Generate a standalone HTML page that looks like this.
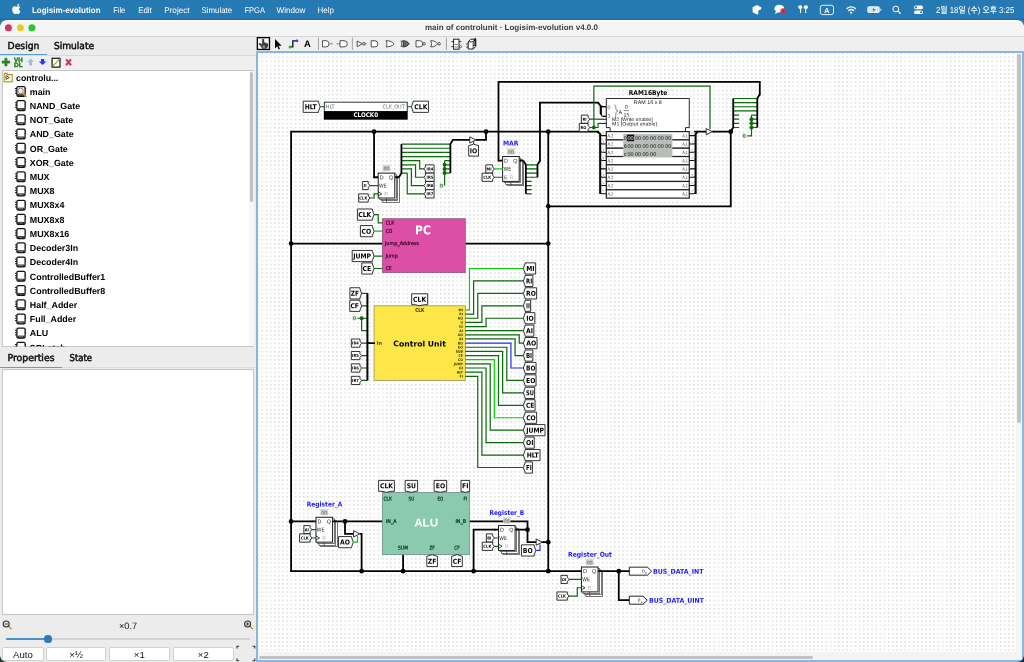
<!DOCTYPE html>
<html lang="ko"><head><meta charset="utf-8"><title>main of controlunit · Logisim-evolution v4.0.0</title>
<style>
html,body{margin:0;padding:0}
body{width:1024px;height:662px;overflow:hidden;position:relative;background:#ececec;font-family:"Liberation Sans","Noto Sans CJK KR",sans-serif;}
.abs{position:absolute}
.t{position:absolute;white-space:nowrap;line-height:1}
svg text{white-space:pre;text-rendering:geometricPrecision}
svg{will-change:transform}
.btn{will-change:transform}
</style></head><body>
<div class="abs" id="menubar" style="left:0;top:0;width:1024px;height:19.6px;background:linear-gradient(#267ab4 0,#267ab4 17.4px,#1f6ea8 19.2px)"></div>
<div class="abs" id="window" style="left:0;top:19.6px;width:1024px;height:642.4px;background:#ececec;border-radius:5.5px 5.5px 0 0"></div>
<div class="abs" id="titlebar" style="left:0;top:19.6px;width:1024px;height:17px;background:#f5f5f5;border-radius:5.5px 5.5px 0 0;border-top:0.9px solid #fff;border-bottom:0.8px solid #d6d6d6;box-sizing:border-box"></div>
<div class="abs" id="tabs1" style="left:0;top:36.6px;width:255.5px;height:18.4px;background:#ececec;border-bottom:0.8px solid #dadada"></div>
<div class="abs" style="left:0;top:54px;width:47px;height:1.4px;background:#5b9bd8"></div>
<div class="abs" id="projbar" style="left:0;top:55.6px;width:255.5px;height:14.6px;background:#efefef"></div>
<div class="abs" id="tree" style="left:1.5px;top:70.4px;width:252.6px;height:276.2px;background:#fff;border:0.8px solid #c6c6c6;box-sizing:border-box"></div>
<div class="abs" style="left:248.9px;top:71.2px;width:5.2px;height:274.8px;background:#f6f6f6"></div>
<div class="abs" style="left:249.6px;top:72.4px;width:3.3px;height:129.6px;background:#c1c1c1;border-radius:1.7px"></div>
<div class="abs" id="tabs2" style="left:0;top:347px;width:255.5px;height:21.6px;background:#ececec"></div>
<div class="abs" style="left:0;top:367.2px;width:255.5px;height:1.2px;background:#dedede"></div>
<div class="abs" style="left:0;top:367.1px;width:62px;height:1.4px;background:#5b9bd8"></div>
<div class="abs" id="props" style="left:1.5px;top:369.4px;width:252.6px;height:246px;background:#fff;border:0.8px solid #c6c6c6;box-sizing:border-box"></div>
<div class="abs" style="left:6px;top:638.3px;width:244px;height:1.4px;background:#d2d2d2;border-radius:1px"></div>
<div class="abs" style="left:6px;top:638.2px;width:42px;height:1.6px;background:#4a90d6;border-radius:1px"></div>
<div class="abs" style="left:44.4px;top:635.4px;width:7.2px;height:7.2px;background:#2b7bc0;border-radius:50%"></div>
<div class="abs btn" style="left:1.6px;top:646.6px;width:41.8px;height:13.6px;background:#fff;border:0.8px solid #d0d0d0;border-radius:2px;box-sizing:border-box;font-size:9.6px;line-height:13px;text-align:center;color:#111">Auto</div>
<div class="abs btn" style="left:46.4px;top:646.6px;width:60.2px;height:13.6px;background:#fff;border:0.8px solid #d0d0d0;border-radius:2px;box-sizing:border-box;font-size:9.6px;line-height:13px;text-align:center;color:#111">×½</div>
<div class="abs btn" style="left:109.4px;top:646.6px;width:60.6px;height:13.6px;background:#fff;border:0.8px solid #d0d0d0;border-radius:2px;box-sizing:border-box;font-size:9.6px;line-height:13px;text-align:center;color:#111">×1</div>
<div class="abs btn" style="left:172.8px;top:646.6px;width:60.6px;height:13.6px;background:#fff;border:0.8px solid #d0d0d0;border-radius:2px;box-sizing:border-box;font-size:9.6px;line-height:13px;text-align:center;color:#111">×2</div>
<div class="abs" id="toolbar" style="left:255.5px;top:36.6px;width:768.5px;height:14.6px;background:#efefef"></div>
<div class="abs" id="canvas" style="left:256px;top:51.1px;width:768px;height:610.9px;background:#8ab6e6"></div>
<div class="abs" style="left:257.9px;top:53px;width:763.8px;height:607.3px;background:#fff"></div>
<div class="abs" style="left:1016.2px;top:53px;width:5.5px;height:599px;background:#f4f4f4"></div>
<div class="abs" style="left:257.9px;top:652.4px;width:763.8px;height:7.9px;background:#f4f4f4"></div>
<div class="abs" style="left:1017.4px;top:54.2px;width:3.4px;height:368.4px;background:#c2c2c2;border-radius:1.7px"></div>
<div class="abs" style="left:259.4px;top:655.6px;width:553.4px;height:3.2px;background:#c2c2c2;border-radius:1.6px"></div>
<div class="abs" style="left:0;top:656px;width:6px;height:6px;background:radial-gradient(circle at 6px 0px, rgba(0,0,0,0) 5.4px, #23382c 5.9px)"></div>
<div class="abs" style="left:1018px;top:656px;width:6px;height:6px;background:radial-gradient(circle at 0px 0px, rgba(0,0,0,0) 5.4px, #1d2a26 5.9px)"></div>
<div class="abs" style="left:0;top:19.6px;width:6px;height:6px;background:radial-gradient(circle at 6px 6px, rgba(0,0,0,0) 5.4px, #2778b5 5.9px)"></div>
<div class="abs" style="left:1018px;top:19.6px;width:6px;height:6px;background:radial-gradient(circle at 0px 6px, rgba(0,0,0,0) 5.4px, #2778b5 5.9px)"></div>
<svg class="abs" style="left:0;top:0" width="1024" height="662" viewBox="0 0 1024 662">
<g fill="#fff"><path d="M17.9 8.1c0-1.3 1.05-1.9 1.1-1.95-0.6-0.88-1.53-1-1.86-1.01-0.79-0.08-1.55 0.47-1.95 0.47-0.4 0-1.02-0.46-1.68-0.45-0.86 0.01-1.66 0.5-2.1 1.28-0.9 1.56-0.23 3.86 0.64 5.12 0.43 0.62 0.94 1.31 1.6 1.29 0.64-0.03 0.89-0.42 1.66-0.42 0.78 0 1 0.42 1.68 0.4 0.69-0.01 1.13-0.63 1.55-1.25 0.49-0.72 0.69-1.41 0.7-1.45-0.02-0.01-1.34-0.51-1.35-2.03z" transform="translate(1.2,1.2)"/><path d="M17.5 4.2c0.35-0.43 0.59-1.02 0.53-1.61-0.51 0.02-1.12 0.34-1.49 0.77-0.33 0.38-0.61 0.98-0.54 1.56 0.57 0.04 1.15-0.29 1.5-0.72z" transform="translate(1.2,1.2)"/></g>
<text x="32" y="12.6" font-size="8.3" font-weight="bold" fill="#fff" font-family='"Liberation Sans","Noto Sans CJK KR",sans-serif' text-anchor="start" textLength="68.5" lengthAdjust="spacingAndGlyphs" >Logisim-evolution</text>
<text x="113.2" y="12.6" font-size="8.3" font-weight="normal" fill="#fff" font-family='"Liberation Sans","Noto Sans CJK KR",sans-serif' text-anchor="start" textLength="12.0" lengthAdjust="spacingAndGlyphs" >File</text>
<text x="138.2" y="12.6" font-size="8.3" font-weight="normal" fill="#fff" font-family='"Liberation Sans","Noto Sans CJK KR",sans-serif' text-anchor="start" textLength="13.6" lengthAdjust="spacingAndGlyphs" >Edit</text>
<text x="164.2" y="12.6" font-size="8.3" font-weight="normal" fill="#fff" font-family='"Liberation Sans","Noto Sans CJK KR",sans-serif' text-anchor="start" textLength="25.4" lengthAdjust="spacingAndGlyphs" >Project</text>
<text x="201.5" y="12.6" font-size="8.3" font-weight="normal" fill="#fff" font-family='"Liberation Sans","Noto Sans CJK KR",sans-serif' text-anchor="start" textLength="30.7" lengthAdjust="spacingAndGlyphs" >Simulate</text>
<text x="244.5" y="12.6" font-size="8.3" font-weight="normal" fill="#fff" font-family='"Liberation Sans","Noto Sans CJK KR",sans-serif' text-anchor="start" textLength="20.5" lengthAdjust="spacingAndGlyphs" >FPGA</text>
<text x="276.5" y="12.6" font-size="8.3" font-weight="normal" fill="#fff" font-family='"Liberation Sans","Noto Sans CJK KR",sans-serif' text-anchor="start" textLength="29.0" lengthAdjust="spacingAndGlyphs" >Window</text>
<text x="317.5" y="12.6" font-size="8.3" font-weight="normal" fill="#fff" font-family='"Liberation Sans","Noto Sans CJK KR",sans-serif' text-anchor="start" textLength="16.5" lengthAdjust="spacingAndGlyphs" >Help</text>
<text x="936" y="12.799999999999999" font-size="8.6" font-weight="500" fill="#fff" font-family='"Liberation Sans","Noto Sans CJK KR",sans-serif' text-anchor="start" textLength="78.3" lengthAdjust="spacingAndGlyphs" >2월 18일 (수) 오후 3:25</text>
<g fill="#fff" stroke="none">
<path d="M752.6 7.2 L757 4.9 L761.2 7.2 L761.2 9.2 L758.3 10.4 L758.3 13.9 L757 14.5 L752.6 12.2 Z"/>
<ellipse cx="779.3" cy="8.6" rx="4.9" ry="3.9"/><path d="M776 11 L775 14 L779 12 Z"/>
<circle cx="783.3" cy="11.2" r="2.9" fill="#e0324b"/><circle cx="783.3" cy="11.2" r="1.2" fill="#b8283c"/>
<path d="M798.2 7.3a2.1 2.1 0 0 1 4.2 0 v1.2 h-1.3 v4.6 h-1.1 v-4.2 a2 2 0 0 1 -1.8 -1.6z"/>
<path d="M808 7.3a2.1 2.1 0 0 0 -4.2 0 v1.2 h1.3 v4.6 h1.1 v-4.2 a2 2 0 0 0 1.8 -1.6z"/>
</g>
<rect x="820.3" y="5.3" width="13.2" height="9.3" rx="2.2" fill="none" stroke="#fff" stroke-width="0.9"/>
<text x="826.9" y="12.6" font-size="7.2" font-weight="bold" fill="#fff" font-family='"Liberation Sans","Noto Sans CJK KR",sans-serif' text-anchor="middle" >A</text>
<g fill="none" stroke="#fff" stroke-linecap="round"><path d="M847 8.6a6.2 6.2 0 0 1 8.4 0" stroke-width="1.3"/><path d="M848.7 10.6a3.8 3.8 0 0 1 5 0" stroke-width="1.3"/></g><circle cx="851.2" cy="12.7" r="1.1" fill="#fff"/>
<rect x="867.3" y="6.3" width="12.4" height="6.8" rx="1.8" fill="#fff" opacity="0.92"/><rect x="880.3" y="8.4" width="1.1" height="2.6" rx="0.5" fill="#fff" opacity="0.8"/>
<path d="M874.6 6.8 l-2.6 3.4 h1.9 l-0.9 2.6 l2.8 -3.5 h-1.9 z" fill="#2778b5"/>
<path d="M869 7.5v4.4M871 7.5v4.4M877.3 7.5v4.4" stroke="#2778b5" stroke-width="0.5" opacity="0.5"/>
<circle cx="895.8" cy="9" r="2.9" fill="none" stroke="#fff" stroke-width="1"/><line x1="898" y1="11.2" x2="900.3" y2="13.5" stroke="#fff" stroke-width="1.1" stroke-linecap="round"/>
<rect x="914" y="5.6" width="9" height="3.7" rx="1.85" fill="#fff"/><rect x="914" y="10.4" width="9" height="3.7" rx="1.85" fill="#fff"/><circle cx="915.9" cy="7.45" r="1.1" fill="#2778b5"/><circle cx="921.1" cy="12.25" r="1.1" fill="#2778b5"/>
<circle cx="8.4" cy="27.7" r="3.5" fill="#d2365f"/><circle cx="20.4" cy="27.7" r="3.5" fill="#eed02a"/><circle cx="31.9" cy="27.7" r="3.5" fill="#27c728"/>
<circle cx="20.4" cy="27.7" r="1.6" fill="none" stroke="#d9b822" stroke-width="0.6"/>
<text x="511.5" y="30.4" font-size="8.1" font-weight="bold" fill="#3e3e3e" font-family='"Liberation Sans","Noto Sans CJK KR",sans-serif' text-anchor="middle" textLength="173" lengthAdjust="spacingAndGlyphs" >main of controlunit · Logisim-evolution v4.0.0</text>
<text x="7.5" y="49.4" font-size="9.5" font-weight="normal" fill="#111" font-family='"DejaVu Sans","Liberation Sans",sans-serif' text-anchor="start" textLength="32" lengthAdjust="spacingAndGlyphs" stroke="#111" stroke-width="0.5">Design</text>
<text x="53.9" y="49.4" font-size="9.5" font-weight="normal" fill="#111" font-family='"DejaVu Sans","Liberation Sans",sans-serif' text-anchor="start" textLength="40.2" lengthAdjust="spacingAndGlyphs" stroke="#111" stroke-width="0.5">Simulate</text>
<text x="7.5" y="361.4" font-size="9.5" font-weight="normal" fill="#111" font-family='"DejaVu Sans","Liberation Sans",sans-serif' text-anchor="start" textLength="47" lengthAdjust="spacingAndGlyphs" stroke="#111" stroke-width="0.5">Properties</text>
<text x="69.5" y="361.4" font-size="9.5" font-weight="normal" fill="#111" font-family='"DejaVu Sans","Liberation Sans",sans-serif' text-anchor="start" textLength="22.6" lengthAdjust="spacingAndGlyphs" stroke="#111" stroke-width="0.5">State</text>
<path d="M4.8 58.2h2.3v2.7h2.7v2.3h-2.7v2.7h-2.3v-2.7h-2.7v-2.3h2.7z" fill="#1d8f1d" stroke="#0f6d0f" stroke-width="0.4"/>
<text x="14" y="62.1" font-size="6.2" font-weight="bold" fill="#1a7f1a" font-family='"Liberation Sans","Noto Sans CJK KR",sans-serif' text-anchor="start" textLength="8.7" lengthAdjust="spacingAndGlyphs" stroke="#1a7f1a" stroke-width="0.35">VH</text>
<text x="14" y="66.9" font-size="6.2" font-weight="bold" fill="#1a7f1a" font-family='"Liberation Sans","Noto Sans CJK KR",sans-serif' text-anchor="start" textLength="8.7" lengthAdjust="spacingAndGlyphs" stroke="#1a7f1a" stroke-width="0.35">DL</text>
<path d="M30.6 58.5l3.4 3.5h-2v3.4h-2.8v-3.4h-2z" fill="#93c2f0"/>
<path d="M42.6 65.1l3.8-3.7h-2.2v-2.5h-3.2v2.5h-2.2z" fill="#1d3dff"/>
<rect x="52.1" y="58.3" width="7.9" height="8.8" fill="#fff" stroke="#111" stroke-width="1.2"/><line x1="52.6" y1="66.3" x2="59.6" y2="58.9" stroke="#b8901c" stroke-width="1.1"/><circle cx="52.3" cy="62" r="0.7" fill="#1eaa1e"/><circle cx="59.9" cy="61" r="0.7" fill="#2040ff"/>
<path d="M65.3 60l1.6-1.3 1.6 1.9 1.7-1.9 1.6 1.3-1.8 2.3 1.8 2.3-1.6 1.3-1.7-1.9-1.6 1.9-1.6-1.3 1.8-2.3z" fill="#d6336a"/>
<g><path d="M4.2 73.4h3v1.2h5v7.2h-8z" fill="#fff" stroke="#b3940f" stroke-width="1.1"/><path d="M6 75.6l3.4 1.9-3.4 1.9z" fill="#fff" stroke="#111" stroke-width="0.7"/><line x1="4" y1="82.2" x2="12.6" y2="82.2" stroke="#8bc34a" stroke-width="0.5"/></g>
<text x="16.1" y="80.9" font-size="8.9" font-weight="bold" fill="#000" font-family='"Liberation Sans","Noto Sans CJK KR",sans-serif' text-anchor="start" textLength="42.2" lengthAdjust="spacingAndGlyphs" >controlu...</text>
<clipPath id="treeclip"><rect x="2" y="71" width="247" height="275.4"/></clipPath><g clip-path="url(#treeclip)">
<g transform="translate(15,85.7)"><rect x="1.9" y="0.8" width="8.2" height="9.8" rx="1.3" fill="#fff" stroke="#111" stroke-width="1.25"/><rect x="2.4" y="8.2" width="7.2" height="2.2" fill="#222"/><rect x="3.6" y="8.9" width="4.6" height="0.7" fill="#999"/><rect x="0" y="2.3" width="1.9" height="1" fill="#111"/><rect x="0" y="4.6" width="1.9" height="1" fill="#111"/><rect x="0" y="6.9" width="1.9" height="1" fill="#111"/><rect x="10.1" y="2.3" width="1" height="1" fill="#111"/><rect x="10.1" y="4.6" width="1" height="1" fill="#111"/><circle cx="5.6" cy="5.2" r="2.7" fill="#eee" stroke="#8a8a8a" stroke-width="1"/><line x1="7.6" y1="7.4" x2="11.2" y2="10.9" stroke="#c8901a" stroke-width="1.5" stroke-linecap="round"/></g>
<text x="29.8" y="94.7" font-size="8.9" font-weight="bold" fill="#000" font-family='"Liberation Sans","Noto Sans CJK KR",sans-serif' text-anchor="start" >main</text>
<g transform="translate(15,99.92)"><rect x="1.9" y="0.8" width="8.2" height="9.8" rx="1.3" fill="#fff" stroke="#111" stroke-width="1.25"/><rect x="2.4" y="8.2" width="7.2" height="2.2" fill="#222"/><rect x="3.6" y="8.9" width="4.6" height="0.7" fill="#999"/><rect x="0" y="2.3" width="1.9" height="1" fill="#111"/><rect x="0" y="4.6" width="1.9" height="1" fill="#111"/><rect x="0" y="6.9" width="1.9" height="1" fill="#111"/><rect x="10.1" y="2.3" width="1" height="1" fill="#111"/><rect x="10.1" y="4.6" width="1" height="1" fill="#111"/></g>
<text x="29.8" y="108.92" font-size="8.9" font-weight="bold" fill="#000" font-family='"Liberation Sans","Noto Sans CJK KR",sans-serif' text-anchor="start" >NAND_Gate</text>
<g transform="translate(15,114.14)"><rect x="1.9" y="0.8" width="8.2" height="9.8" rx="1.3" fill="#fff" stroke="#111" stroke-width="1.25"/><rect x="2.4" y="8.2" width="7.2" height="2.2" fill="#222"/><rect x="3.6" y="8.9" width="4.6" height="0.7" fill="#999"/><rect x="0" y="2.3" width="1.9" height="1" fill="#111"/><rect x="0" y="4.6" width="1.9" height="1" fill="#111"/><rect x="0" y="6.9" width="1.9" height="1" fill="#111"/><rect x="10.1" y="2.3" width="1" height="1" fill="#111"/><rect x="10.1" y="4.6" width="1" height="1" fill="#111"/></g>
<text x="29.8" y="123.14" font-size="8.9" font-weight="bold" fill="#000" font-family='"Liberation Sans","Noto Sans CJK KR",sans-serif' text-anchor="start" >NOT_Gate</text>
<g transform="translate(15,128.36)"><rect x="1.9" y="0.8" width="8.2" height="9.8" rx="1.3" fill="#fff" stroke="#111" stroke-width="1.25"/><rect x="2.4" y="8.2" width="7.2" height="2.2" fill="#222"/><rect x="3.6" y="8.9" width="4.6" height="0.7" fill="#999"/><rect x="0" y="2.3" width="1.9" height="1" fill="#111"/><rect x="0" y="4.6" width="1.9" height="1" fill="#111"/><rect x="0" y="6.9" width="1.9" height="1" fill="#111"/><rect x="10.1" y="2.3" width="1" height="1" fill="#111"/><rect x="10.1" y="4.6" width="1" height="1" fill="#111"/></g>
<text x="29.8" y="137.36" font-size="8.9" font-weight="bold" fill="#000" font-family='"Liberation Sans","Noto Sans CJK KR",sans-serif' text-anchor="start" >AND_Gate</text>
<g transform="translate(15,142.58)"><rect x="1.9" y="0.8" width="8.2" height="9.8" rx="1.3" fill="#fff" stroke="#111" stroke-width="1.25"/><rect x="2.4" y="8.2" width="7.2" height="2.2" fill="#222"/><rect x="3.6" y="8.9" width="4.6" height="0.7" fill="#999"/><rect x="0" y="2.3" width="1.9" height="1" fill="#111"/><rect x="0" y="4.6" width="1.9" height="1" fill="#111"/><rect x="0" y="6.9" width="1.9" height="1" fill="#111"/><rect x="10.1" y="2.3" width="1" height="1" fill="#111"/><rect x="10.1" y="4.6" width="1" height="1" fill="#111"/></g>
<text x="29.8" y="151.58" font-size="8.9" font-weight="bold" fill="#000" font-family='"Liberation Sans","Noto Sans CJK KR",sans-serif' text-anchor="start" >OR_Gate</text>
<g transform="translate(15,156.8)"><rect x="1.9" y="0.8" width="8.2" height="9.8" rx="1.3" fill="#fff" stroke="#111" stroke-width="1.25"/><rect x="2.4" y="8.2" width="7.2" height="2.2" fill="#222"/><rect x="3.6" y="8.9" width="4.6" height="0.7" fill="#999"/><rect x="0" y="2.3" width="1.9" height="1" fill="#111"/><rect x="0" y="4.6" width="1.9" height="1" fill="#111"/><rect x="0" y="6.9" width="1.9" height="1" fill="#111"/><rect x="10.1" y="2.3" width="1" height="1" fill="#111"/><rect x="10.1" y="4.6" width="1" height="1" fill="#111"/></g>
<text x="29.8" y="165.8" font-size="8.9" font-weight="bold" fill="#000" font-family='"Liberation Sans","Noto Sans CJK KR",sans-serif' text-anchor="start" >XOR_Gate</text>
<g transform="translate(15,171.02)"><rect x="1.9" y="0.8" width="8.2" height="9.8" rx="1.3" fill="#fff" stroke="#111" stroke-width="1.25"/><rect x="2.4" y="8.2" width="7.2" height="2.2" fill="#222"/><rect x="3.6" y="8.9" width="4.6" height="0.7" fill="#999"/><rect x="0" y="2.3" width="1.9" height="1" fill="#111"/><rect x="0" y="4.6" width="1.9" height="1" fill="#111"/><rect x="0" y="6.9" width="1.9" height="1" fill="#111"/><rect x="10.1" y="2.3" width="1" height="1" fill="#111"/><rect x="10.1" y="4.6" width="1" height="1" fill="#111"/></g>
<text x="29.8" y="180.02" font-size="8.9" font-weight="bold" fill="#000" font-family='"Liberation Sans","Noto Sans CJK KR",sans-serif' text-anchor="start" >MUX</text>
<g transform="translate(15,185.24)"><rect x="1.9" y="0.8" width="8.2" height="9.8" rx="1.3" fill="#fff" stroke="#111" stroke-width="1.25"/><rect x="2.4" y="8.2" width="7.2" height="2.2" fill="#222"/><rect x="3.6" y="8.9" width="4.6" height="0.7" fill="#999"/><rect x="0" y="2.3" width="1.9" height="1" fill="#111"/><rect x="0" y="4.6" width="1.9" height="1" fill="#111"/><rect x="0" y="6.9" width="1.9" height="1" fill="#111"/><rect x="10.1" y="2.3" width="1" height="1" fill="#111"/><rect x="10.1" y="4.6" width="1" height="1" fill="#111"/></g>
<text x="29.8" y="194.24" font-size="8.9" font-weight="bold" fill="#000" font-family='"Liberation Sans","Noto Sans CJK KR",sans-serif' text-anchor="start" >MUX8</text>
<g transform="translate(15,199.46)"><rect x="1.9" y="0.8" width="8.2" height="9.8" rx="1.3" fill="#fff" stroke="#111" stroke-width="1.25"/><rect x="2.4" y="8.2" width="7.2" height="2.2" fill="#222"/><rect x="3.6" y="8.9" width="4.6" height="0.7" fill="#999"/><rect x="0" y="2.3" width="1.9" height="1" fill="#111"/><rect x="0" y="4.6" width="1.9" height="1" fill="#111"/><rect x="0" y="6.9" width="1.9" height="1" fill="#111"/><rect x="10.1" y="2.3" width="1" height="1" fill="#111"/><rect x="10.1" y="4.6" width="1" height="1" fill="#111"/></g>
<text x="29.8" y="208.46" font-size="8.9" font-weight="bold" fill="#000" font-family='"Liberation Sans","Noto Sans CJK KR",sans-serif' text-anchor="start" >MUX8x4</text>
<g transform="translate(15,213.68)"><rect x="1.9" y="0.8" width="8.2" height="9.8" rx="1.3" fill="#fff" stroke="#111" stroke-width="1.25"/><rect x="2.4" y="8.2" width="7.2" height="2.2" fill="#222"/><rect x="3.6" y="8.9" width="4.6" height="0.7" fill="#999"/><rect x="0" y="2.3" width="1.9" height="1" fill="#111"/><rect x="0" y="4.6" width="1.9" height="1" fill="#111"/><rect x="0" y="6.9" width="1.9" height="1" fill="#111"/><rect x="10.1" y="2.3" width="1" height="1" fill="#111"/><rect x="10.1" y="4.6" width="1" height="1" fill="#111"/></g>
<text x="29.8" y="222.68" font-size="8.9" font-weight="bold" fill="#000" font-family='"Liberation Sans","Noto Sans CJK KR",sans-serif' text-anchor="start" >MUX8x8</text>
<g transform="translate(15,227.9)"><rect x="1.9" y="0.8" width="8.2" height="9.8" rx="1.3" fill="#fff" stroke="#111" stroke-width="1.25"/><rect x="2.4" y="8.2" width="7.2" height="2.2" fill="#222"/><rect x="3.6" y="8.9" width="4.6" height="0.7" fill="#999"/><rect x="0" y="2.3" width="1.9" height="1" fill="#111"/><rect x="0" y="4.6" width="1.9" height="1" fill="#111"/><rect x="0" y="6.9" width="1.9" height="1" fill="#111"/><rect x="10.1" y="2.3" width="1" height="1" fill="#111"/><rect x="10.1" y="4.6" width="1" height="1" fill="#111"/></g>
<text x="29.8" y="236.9" font-size="8.9" font-weight="bold" fill="#000" font-family='"Liberation Sans","Noto Sans CJK KR",sans-serif' text-anchor="start" >MUX8x16</text>
<g transform="translate(15,242.12)"><rect x="1.9" y="0.8" width="8.2" height="9.8" rx="1.3" fill="#fff" stroke="#111" stroke-width="1.25"/><rect x="2.4" y="8.2" width="7.2" height="2.2" fill="#222"/><rect x="3.6" y="8.9" width="4.6" height="0.7" fill="#999"/><rect x="0" y="2.3" width="1.9" height="1" fill="#111"/><rect x="0" y="4.6" width="1.9" height="1" fill="#111"/><rect x="0" y="6.9" width="1.9" height="1" fill="#111"/><rect x="10.1" y="2.3" width="1" height="1" fill="#111"/><rect x="10.1" y="4.6" width="1" height="1" fill="#111"/></g>
<text x="29.8" y="251.12" font-size="8.9" font-weight="bold" fill="#000" font-family='"Liberation Sans","Noto Sans CJK KR",sans-serif' text-anchor="start" >Decoder3In</text>
<g transform="translate(15,256.34)"><rect x="1.9" y="0.8" width="8.2" height="9.8" rx="1.3" fill="#fff" stroke="#111" stroke-width="1.25"/><rect x="2.4" y="8.2" width="7.2" height="2.2" fill="#222"/><rect x="3.6" y="8.9" width="4.6" height="0.7" fill="#999"/><rect x="0" y="2.3" width="1.9" height="1" fill="#111"/><rect x="0" y="4.6" width="1.9" height="1" fill="#111"/><rect x="0" y="6.9" width="1.9" height="1" fill="#111"/><rect x="10.1" y="2.3" width="1" height="1" fill="#111"/><rect x="10.1" y="4.6" width="1" height="1" fill="#111"/></g>
<text x="29.8" y="265.34" font-size="8.9" font-weight="bold" fill="#000" font-family='"Liberation Sans","Noto Sans CJK KR",sans-serif' text-anchor="start" >Decoder4In</text>
<g transform="translate(15,270.56)"><rect x="1.9" y="0.8" width="8.2" height="9.8" rx="1.3" fill="#fff" stroke="#111" stroke-width="1.25"/><rect x="2.4" y="8.2" width="7.2" height="2.2" fill="#222"/><rect x="3.6" y="8.9" width="4.6" height="0.7" fill="#999"/><rect x="0" y="2.3" width="1.9" height="1" fill="#111"/><rect x="0" y="4.6" width="1.9" height="1" fill="#111"/><rect x="0" y="6.9" width="1.9" height="1" fill="#111"/><rect x="10.1" y="2.3" width="1" height="1" fill="#111"/><rect x="10.1" y="4.6" width="1" height="1" fill="#111"/></g>
<text x="29.8" y="279.56" font-size="8.9" font-weight="bold" fill="#000" font-family='"Liberation Sans","Noto Sans CJK KR",sans-serif' text-anchor="start" >ControlledBuffer1</text>
<g transform="translate(15,284.78)"><rect x="1.9" y="0.8" width="8.2" height="9.8" rx="1.3" fill="#fff" stroke="#111" stroke-width="1.25"/><rect x="2.4" y="8.2" width="7.2" height="2.2" fill="#222"/><rect x="3.6" y="8.9" width="4.6" height="0.7" fill="#999"/><rect x="0" y="2.3" width="1.9" height="1" fill="#111"/><rect x="0" y="4.6" width="1.9" height="1" fill="#111"/><rect x="0" y="6.9" width="1.9" height="1" fill="#111"/><rect x="10.1" y="2.3" width="1" height="1" fill="#111"/><rect x="10.1" y="4.6" width="1" height="1" fill="#111"/></g>
<text x="29.8" y="293.78" font-size="8.9" font-weight="bold" fill="#000" font-family='"Liberation Sans","Noto Sans CJK KR",sans-serif' text-anchor="start" >ControlledBuffer8</text>
<g transform="translate(15,299.0)"><rect x="1.9" y="0.8" width="8.2" height="9.8" rx="1.3" fill="#fff" stroke="#111" stroke-width="1.25"/><rect x="2.4" y="8.2" width="7.2" height="2.2" fill="#222"/><rect x="3.6" y="8.9" width="4.6" height="0.7" fill="#999"/><rect x="0" y="2.3" width="1.9" height="1" fill="#111"/><rect x="0" y="4.6" width="1.9" height="1" fill="#111"/><rect x="0" y="6.9" width="1.9" height="1" fill="#111"/><rect x="10.1" y="2.3" width="1" height="1" fill="#111"/><rect x="10.1" y="4.6" width="1" height="1" fill="#111"/></g>
<text x="29.8" y="308.0" font-size="8.9" font-weight="bold" fill="#000" font-family='"Liberation Sans","Noto Sans CJK KR",sans-serif' text-anchor="start" >Half_Adder</text>
<g transform="translate(15,313.22)"><rect x="1.9" y="0.8" width="8.2" height="9.8" rx="1.3" fill="#fff" stroke="#111" stroke-width="1.25"/><rect x="2.4" y="8.2" width="7.2" height="2.2" fill="#222"/><rect x="3.6" y="8.9" width="4.6" height="0.7" fill="#999"/><rect x="0" y="2.3" width="1.9" height="1" fill="#111"/><rect x="0" y="4.6" width="1.9" height="1" fill="#111"/><rect x="0" y="6.9" width="1.9" height="1" fill="#111"/><rect x="10.1" y="2.3" width="1" height="1" fill="#111"/><rect x="10.1" y="4.6" width="1" height="1" fill="#111"/></g>
<text x="29.8" y="322.22" font-size="8.9" font-weight="bold" fill="#000" font-family='"Liberation Sans","Noto Sans CJK KR",sans-serif' text-anchor="start" >Full_Adder</text>
<g transform="translate(15,327.44)"><rect x="1.9" y="0.8" width="8.2" height="9.8" rx="1.3" fill="#fff" stroke="#111" stroke-width="1.25"/><rect x="2.4" y="8.2" width="7.2" height="2.2" fill="#222"/><rect x="3.6" y="8.9" width="4.6" height="0.7" fill="#999"/><rect x="0" y="2.3" width="1.9" height="1" fill="#111"/><rect x="0" y="4.6" width="1.9" height="1" fill="#111"/><rect x="0" y="6.9" width="1.9" height="1" fill="#111"/><rect x="10.1" y="2.3" width="1" height="1" fill="#111"/><rect x="10.1" y="4.6" width="1" height="1" fill="#111"/></g>
<text x="29.8" y="336.44" font-size="8.9" font-weight="bold" fill="#000" font-family='"Liberation Sans","Noto Sans CJK KR",sans-serif' text-anchor="start" >ALU</text>
<g transform="translate(15,341.66)"><rect x="1.9" y="0.8" width="8.2" height="9.8" rx="1.3" fill="#fff" stroke="#111" stroke-width="1.25"/><rect x="2.4" y="8.2" width="7.2" height="2.2" fill="#222"/><rect x="3.6" y="8.9" width="4.6" height="0.7" fill="#999"/><rect x="0" y="2.3" width="1.9" height="1" fill="#111"/><rect x="0" y="4.6" width="1.9" height="1" fill="#111"/><rect x="0" y="6.9" width="1.9" height="1" fill="#111"/><rect x="10.1" y="2.3" width="1" height="1" fill="#111"/><rect x="10.1" y="4.6" width="1" height="1" fill="#111"/></g>
<text x="29.8" y="350.66" font-size="8.9" font-weight="bold" fill="#000" font-family='"Liberation Sans","Noto Sans CJK KR",sans-serif' text-anchor="start" >SRLatch</text>
</g>
<g transform="translate(2.6,620.4)"><line x1="5.6" y1="5.6" x2="8.6" y2="8.4" stroke="#c9981a" stroke-width="1.4" stroke-linecap="round"/><circle cx="3.6" cy="3.6" r="3" fill="#e4e4e4" stroke="#333" stroke-width="1.1"/><line x1="2" y1="3.6" x2="5.2" y2="3.6" stroke="#333" stroke-width="0.9"/></g>
<g transform="translate(244,620.4)"><line x1="5.6" y1="5.6" x2="8.6" y2="8.4" stroke="#c9981a" stroke-width="1.4" stroke-linecap="round"/><circle cx="3.6" cy="3.6" r="3" fill="#e4e4e4" stroke="#333" stroke-width="1.1"/><line x1="2" y1="3.6" x2="5.2" y2="3.6" stroke="#333" stroke-width="0.9"/><line x1="3.6" y1="2" x2="3.6" y2="5.2" stroke="#333" stroke-width="0.9"/></g>
<text x="128" y="628.8" font-size="9.2" font-weight="normal" fill="#111" font-family='"Liberation Sans","Noto Sans CJK KR",sans-serif' text-anchor="middle" >×0.7</text>
<g fill="none" stroke="#333" stroke-width="1.1"><path d="M237 648.4v-2.2h2.2M252.6 646.2h2.2v2.2M237 658.6v2.2h2.2M252.6 660.8h2.2v-2.2"/></g>
<rect x="257.35" y="37.65" width="12.1" height="11.8" fill="#fff" stroke="#000" stroke-width="1.35"/>
<g fill="#3c3c3c" stroke="#2a2a2a" stroke-width="0.5" stroke-linejoin="round"><path d="M262.3 39.5c0-0.7 1.6-0.7 1.6 0v2.9l3.2 1c0.7 0.3 1 0.9 0.9 1.6l-0.4 1.6-1 1.8h-4.2l-1.1-1.7-2.1-2.3c-0.5-0.7 0.2-1.3 0.9-1l2.2 1z"/></g>
<path d="M262.9 48l1-2.4 1 2.4" fill="none" stroke="#7fe07f" stroke-width="0.8"/><path d="M260.6 44.2l2.4 2.6" stroke="#ddd" stroke-width="0.5" stroke-dasharray="0.6 0.6"/>
<path d="M275 39.1v9.3l2.2-2.1 1.5 3.1 1.3-0.6-1.5-3h3.2z" fill="#000" stroke="#fff" stroke-width="0.4" paint-order="stroke"/>
<path d="M290 46.8h2.8v-6h4" fill="none" stroke="#111" stroke-width="1.3"/><circle cx="290" cy="46.9" r="1.5" fill="#1fc01f"/><circle cx="297" cy="40.7" r="1.3" fill="#2040ff"/>
<text x="307.5" y="46.8" font-size="9.4" font-weight="bold" fill="#000" font-family='"Liberation Sans","Noto Sans CJK KR",sans-serif' text-anchor="middle" >A</text>
<line x1="318.5" y1="37.6" x2="318.5" y2="50" stroke="#9a9a9a" stroke-width="0.9"/>
<line x1="352.4" y1="37.6" x2="352.4" y2="50" stroke="#9a9a9a" stroke-width="0.9"/>
<line x1="446.4" y1="37.6" x2="446.4" y2="50" stroke="#9a9a9a" stroke-width="0.9"/>
<path d="M322.5 40.7h3.4a3.1 3.1 0 0 1 0 6.2h-3.4z" fill="#fff" stroke="#333" stroke-width="0.85"/><line x1="329.2" y1="43.8" x2="333" y2="43.8" stroke="#1fc01f" stroke-width="0.9"/>
<line x1="336.4" y1="43.8" x2="340" y2="43.8" stroke="#1fc01f" stroke-width="0.9"/><path d="M340 40.7h4.2a3.1 3.1 0 0 1 0 6.2h-4.2z" fill="#fff" stroke="#333" stroke-width="0.85"/>
<path d="M357.2 41v5.6l5.2-2.8z" fill="#fff" stroke="#333" stroke-width="0.85"/><circle cx="364" cy="43.8" r="1.3" fill="#fff" stroke="#333" stroke-width="0.85"/><line x1="365.3" y1="43.8" x2="366.3" y2="43.8" stroke="#333" stroke-width="0.8"/>
<path d="M371.2 40.7h3.6a3.1 3.1 0 0 1 0 6.2h-3.6z" fill="#fff" stroke="#333" stroke-width="0.85"/>
<path d="M386 40.7c4 0 6.3 1 8 3.1-1.7 2.1-4 3.1-8 3.1 1.2-2 1.2-4.2 0-6.2z" fill="#fff" stroke="#333" stroke-width="0.85"/>
<path d="M402.6 40.7c3.4 0 5.2 1 6.6 3.1-1.4 2.1-3.2 3.1-6.6 3.1 1.2-2 1.2-4.2 0-6.2z" fill="#666" stroke="#222" stroke-width="0.9"/><path d="M401 40.7c1.2 2 1.2 4.2 0 6.2" fill="none" stroke="#222" stroke-width="0.9"/>
<path d="M416 40.7h3.6a3.1 3.1 0 0 1 0 6.2h-3.6z" fill="#fff" stroke="#333" stroke-width="0.85"/><circle cx="424.1" cy="43.8" r="1.25" fill="#fff" stroke="#333" stroke-width="0.85"/>
<path d="M430.7 40.7c3.6 0 5.4 1 6.9 3.1-1.5 2.1-3.3 3.1-6.9 3.1 1.2-2 1.2-4.2 0-6.2z" fill="#fff" stroke="#333" stroke-width="0.85"/><circle cx="439.1" cy="43.8" r="1.25" fill="#fff" stroke="#333" stroke-width="0.85"/>
<rect x="453.6" y="39.2" width="5.4" height="10" fill="#fff" stroke="#222" stroke-width="1"/><path d="M451.4 41.6h2.2M451.4 46.6h2.2M459 41.6h2.4" stroke="#222" stroke-width="0.9"/><circle cx="460.4" cy="46.7" r="1.05" fill="#fff" stroke="#222" stroke-width="0.7"/><path d="M454.8 44.4h3M454.8 47h3" stroke="#222" stroke-width="0.6"/>
<path d="M468.2 41.8l2.6-2.6h5v7.2l-2.6 2.6h-5z" fill="#fff" stroke="#222" stroke-width="1"/><path d="M468.2 41.8h5v7.2M473.2 41.8l2.6-2.6" fill="none" stroke="#222" stroke-width="0.9"/><path d="M466.2 44h2M466.2 47h2M473.2 45.5h2.8" stroke="#222" stroke-width="0.9"/><path d="M473.6 40.6l1.6-1.4v6.8" stroke="#222" stroke-width="1.6" fill="none"/>
</svg><svg class="abs" id="circuit" style="left:0;top:0" width="1024" height="662" viewBox="0 0 1024 662">
<defs><pattern id="grid" x="257.42" y="52.37" width="4.1476" height="4.1464" patternUnits="userSpaceOnUse"><rect x="0.25" y="0.25" width="1.0" height="1.0" fill="#b2b2b2"/></pattern>
<clipPath id="cclip"><rect x="257.9" y="53" width="758.3" height="599.4"/></clipPath></defs>
<g clip-path="url(#cclip)">
<rect x="257.9" y="53" width="758.3" height="599.4" fill="url(#grid)"/>
<polyline points="291.1,571.17 291.1,131.65 598.02,131.65" fill="none" stroke="#000" stroke-width="1.8" stroke-linecap="square" stroke-linejoin="miter"/>
<polyline points="291.1,571.17 577.29,571.17" fill="none" stroke="#000" stroke-width="1.8" stroke-linecap="square" stroke-linejoin="miter"/>
<polyline points="291.1,243.6 382.35,243.6" fill="none" stroke="#000" stroke-width="1.8" stroke-linecap="square" stroke-linejoin="miter"/>
<polyline points="465.3,243.6 548.25,243.6" fill="none" stroke="#000" stroke-width="1.8" stroke-linecap="square" stroke-linejoin="miter"/>
<polyline points="548.25,131.65 548.25,571.17" fill="none" stroke="#000" stroke-width="1.8" stroke-linecap="square" stroke-linejoin="miter"/>
<polyline points="548.25,206.29 730.75,206.29 730.75,131.65" fill="none" stroke="#000" stroke-width="1.8" stroke-linecap="square" stroke-linejoin="miter"/>
<polyline points="374.05,131.65 374.05,177.26" fill="none" stroke="#000" stroke-width="1.8" stroke-linecap="square" stroke-linejoin="miter"/>
<polyline points="486.04,131.65 486.04,139.94 477.74,139.94" fill="none" stroke="#000" stroke-width="1.8" stroke-linecap="square" stroke-linejoin="miter"/>
<polyline points="452.86,139.94 469.45,139.94" fill="none" stroke="#000" stroke-width="1.8" stroke-linecap="square" stroke-linejoin="miter"/>
<polyline points="498.48,160.68 498.48,81.89 759.78,81.89 759.78,94.33" fill="none" stroke="#000" stroke-width="1.8" stroke-linecap="square" stroke-linejoin="miter"/>
<polyline points="539.96,160.68 539.96,102.63 598.02,102.63" fill="none" stroke="#000" stroke-width="1.8" stroke-linecap="square" stroke-linejoin="miter"/>
<polyline points="714.16,131.65 730.75,131.65" fill="none" stroke="#000" stroke-width="1.8" stroke-linecap="square" stroke-linejoin="miter"/>
<polyline points="291.1,521.41 311.84,521.41" fill="none" stroke="#000" stroke-width="1.8" stroke-linecap="square" stroke-linejoin="miter"/>
<polyline points="336.72,521.41 382.35,521.41" fill="none" stroke="#000" stroke-width="1.8" stroke-linecap="square" stroke-linejoin="miter"/>
<polyline points="345.02,521.41 345.02,533.85 353.31,533.85" fill="none" stroke="#000" stroke-width="1.8" stroke-linecap="square" stroke-linejoin="miter"/>
<polyline points="361.61,533.85 361.61,571.17" fill="none" stroke="#000" stroke-width="1.8" stroke-linecap="square" stroke-linejoin="miter"/>
<polyline points="403.09,554.58 403.09,571.17" fill="none" stroke="#000" stroke-width="1.8" stroke-linecap="square" stroke-linejoin="miter"/>
<polyline points="469.45,521.41 527.51,521.41 527.51,542.15 535.81,542.15" fill="none" stroke="#000" stroke-width="1.8" stroke-linecap="square" stroke-linejoin="miter"/>
<polyline points="519.22,529.71 527.51,529.71" fill="none" stroke="#000" stroke-width="1.8" stroke-linecap="square" stroke-linejoin="miter"/>
<polyline points="473.6,571.17 473.6,529.71 494.33,529.71" fill="none" stroke="#000" stroke-width="1.8" stroke-linecap="square" stroke-linejoin="miter"/>
<polyline points="544.1,542.15 548.25,542.15" fill="none" stroke="#000" stroke-width="1.8" stroke-linecap="square" stroke-linejoin="miter"/>
<polyline points="602.17,571.17 629.54,571.17" fill="none" stroke="#000" stroke-width="1.8" stroke-linecap="square" stroke-linejoin="miter"/>
<polyline points="618.76,571.17 618.76,600.19 629.54,600.19" fill="none" stroke="#000" stroke-width="1.8" stroke-linecap="square" stroke-linejoin="miter"/>
<circle cx="374.05" cy="131.65" r="2.35" fill="#000"/>
<circle cx="486.04" cy="131.65" r="2.35" fill="#000"/>
<circle cx="548.25" cy="131.65" r="2.35" fill="#000"/>
<circle cx="291.1" cy="243.6" r="2.35" fill="#000"/>
<circle cx="548.25" cy="243.6" r="2.35" fill="#000"/>
<circle cx="548.25" cy="206.29" r="2.35" fill="#000"/>
<circle cx="730.75" cy="131.65" r="2.35" fill="#000"/>
<circle cx="291.1" cy="521.41" r="2.35" fill="#000"/>
<circle cx="345.02" cy="521.41" r="2.35" fill="#000"/>
<circle cx="361.61" cy="571.17" r="2.35" fill="#000"/>
<circle cx="403.09" cy="571.17" r="2.35" fill="#000"/>
<circle cx="473.6" cy="571.17" r="2.35" fill="#000"/>
<circle cx="548.25" cy="571.17" r="2.35" fill="#000"/>
<circle cx="548.25" cy="542.15" r="2.35" fill="#000"/>
<circle cx="527.51" cy="529.71" r="2.35" fill="#000"/>
<circle cx="618.76" cy="571.17" r="2.35" fill="#000"/>
<polygon points="320.13,106.77 318.47,102.27 318.47,101.17 303.17,101.17 303.17,112.37 318.47,112.37 318.47,111.27" fill="#fff" stroke="#1c1c1c" stroke-width="0.9" stroke-linejoin="round"/>
<text x="310.67" y="109.26" font-size="6.8" font-weight="bold" fill="#000" font-family='"DejaVu Sans Condensed","DejaVu Sans","Liberation Sans",sans-serif' text-anchor="middle" transform="rotate(0.04 310.67 109.26)" >HLT</text>
<polyline points="320.13,106.77 324.28,106.77" fill="none" stroke="#0a6a0a" stroke-width="1.2" stroke-linecap="butt" stroke-linejoin="miter"/>
<rect x="324.28" y="102.17" width="82.95" height="9.4" fill="#fff" stroke="#1c1c1c" stroke-width="0.9"/>
<rect x="323.83" y="111.37" width="83.85" height="8.3" fill="#000"/>
<text x="325.88" y="108.57" font-size="5.4" font-weight="normal" fill="#6a6a6a" font-family='"DejaVu Sans Condensed","DejaVu Sans","Liberation Sans",sans-serif' text-anchor="start" transform="rotate(0.04 325.88 108.57)" >HLT</text>
<text x="404.63" y="108.57" font-size="5.4" font-weight="normal" fill="#6a6a6a" font-family='"DejaVu Sans Condensed","DejaVu Sans","Liberation Sans",sans-serif' text-anchor="end" transform="rotate(0.04 404.63 108.57)" >CLK_OUT</text>
<text x="365.76" y="117.07" font-size="6.4" font-weight="bold" fill="#fff" font-family='"DejaVu Sans","Liberation Sans",sans-serif' text-anchor="middle" textLength="24.6" lengthAdjust="spacingAndGlyphs" transform="rotate(0.04 365.76 117.07)" >CLOCK0</text>
<polyline points="407.23,106.77 411.38,106.77" fill="none" stroke="#0a6a0a" stroke-width="1.2" stroke-linecap="butt" stroke-linejoin="miter"/>
<polygon points="411.38,106.77 413.04,102.27 413.04,101.17 428.44,101.17 428.44,112.37 413.04,112.37 413.04,111.27" fill="#fff" stroke="#1c1c1c" stroke-width="0.9" stroke-linejoin="round"/>
<text x="420.89" y="109.26" font-size="6.8" font-weight="bold" fill="#000" font-family='"DejaVu Sans Condensed","DejaVu Sans","Liberation Sans",sans-serif' text-anchor="middle" transform="rotate(0.04 420.89 109.26)" >CLK</text>
<path d="M382.7 177.62H399.5V202.5H382.7Z" fill="#fff" stroke="#2a2a2a" stroke-width="0.65"/>
<path d="M381.2 176.12H397.5V200.5H381.2Z" fill="#fff" stroke="#2a2a2a" stroke-width="0.65"/>
<path d="M379.7 174.62H396.5V199.5H379.7Z" fill="#fff" stroke="#2a2a2a" stroke-width="0.65"/>
<line x1="386.5" y1="197.99" x2="386.5" y2="202.19" stroke="#3a3a3a" stroke-width="0.75"/>
<line x1="374.05" y1="177.26" x2="378.2" y2="177.26" stroke="#000" stroke-width="1.8"/>
<line x1="394.79" y1="177.26" x2="398.94" y2="177.26" stroke="#000" stroke-width="1.8"/>
<rect x="378.2" y="173.12" width="16.59" height="24.88" fill="#fff" stroke="#1c1c1c" stroke-width="1"/>
<text x="381.6" y="179.16" font-size="5.4" font-weight="normal" fill="#333" font-family='"Liberation Sans",sans-serif' text-anchor="middle" transform="rotate(0.04 381.6 179.16)" >D</text>
<text x="390.99" y="179.16" font-size="5.4" font-weight="normal" fill="#333" font-family='"Liberation Sans",sans-serif' text-anchor="middle" transform="rotate(0.04 390.99 179.16)" >Q</text>
<text x="379" y="187.45" font-size="5.3" font-weight="normal" fill="#222" font-family='"DejaVu Sans Condensed","DejaVu Sans","Liberation Sans",sans-serif' text-anchor="start" transform="rotate(0.04 379 187.45)" >WE</text>
<path d="M378.2 191.75L381.8 193.85L378.2 195.95" fill="none" stroke="#1c1c1c" stroke-width="0.8"/>
<text x="386.3" y="195.85" font-size="5.4" font-weight="normal" fill="#b4b4b4" font-family='"Liberation Sans",sans-serif' text-anchor="middle" transform="rotate(0.04 386.3 195.85)" >R</text>
<path d="M381.5 164.92L391.5 164.92L389.8 166.32H383.2Z" fill="#d9d9d9"/>
<rect x="382.8" y="165.92" width="7.4" height="5.2" fill="#c9c9c9"/>
<text x="386.5" y="170.27" font-size="4.9" font-weight="normal" fill="#6a6a6a" font-family='"Liberation Sans",sans-serif' text-anchor="middle" transform="rotate(0.04 386.5 170.27)" >00</text>
<polygon points="369.91,185.55 368.25,183.45 368.25,181.45 362.65,181.45 362.65,189.65 368.25,189.65 368.25,187.65" fill="#fff" stroke="#1c1c1c" stroke-width="0.9" stroke-linejoin="round"/>
<text x="365.3" y="187.05" font-size="4.1" font-weight="bold" fill="#000" font-family='"DejaVu Sans Condensed","DejaVu Sans","Liberation Sans",sans-serif' text-anchor="middle" transform="rotate(0.04 365.3 187.05)" >II</text>
<polyline points="369.91,185.55 374.05,185.55" fill="none" stroke="#0a6a0a" stroke-width="1.2" stroke-linecap="butt" stroke-linejoin="miter"/>
<polyline points="374.05,185.55 378.2,185.55" fill="none" stroke="#0a6a0a" stroke-width="1.2" stroke-linecap="butt" stroke-linejoin="miter"/>
<polygon points="369.91,197.99 368.25,195.89 368.25,193.89 358.65,193.89 358.65,202.09 368.25,202.09 368.25,200.09" fill="#fff" stroke="#1c1c1c" stroke-width="0.9" stroke-linejoin="round"/>
<text x="363.3" y="199.49" font-size="4.1" font-weight="bold" fill="#000" font-family='"DejaVu Sans Condensed","DejaVu Sans","Liberation Sans",sans-serif' text-anchor="middle" transform="rotate(0.04 363.3 199.49)" >CLK</text>
<polyline points="369.91,197.99 374.05,197.99 374.05,193.85 378.2,193.85" fill="none" stroke="#0a6a0a" stroke-width="1.2" stroke-linecap="butt" stroke-linejoin="miter"/>
<polyline points="407.23,144.09 444.56,144.09" fill="none" stroke="#0a6a0a" stroke-width="1.2" stroke-linecap="butt" stroke-linejoin="miter"/>
<polyline points="407.23,148.24 444.56,148.24" fill="none" stroke="#0a6a0a" stroke-width="1.2" stroke-linecap="butt" stroke-linejoin="miter"/>
<polyline points="407.23,152.38 444.56,152.38" fill="none" stroke="#0a6a0a" stroke-width="1.2" stroke-linecap="butt" stroke-linejoin="miter"/>
<polyline points="407.23,156.53 444.56,156.53" fill="none" stroke="#0a6a0a" stroke-width="1.2" stroke-linecap="butt" stroke-linejoin="miter"/>
<polyline points="407.23,160.68 419.68,160.68 419.68,168.97 423.82,168.97" fill="none" stroke="#0a6a0a" stroke-width="1.2" stroke-linecap="butt" stroke-linejoin="miter"/>
<polyline points="407.23,164.82 415.53,164.82 415.53,177.26 423.82,177.26" fill="none" stroke="#0a6a0a" stroke-width="1.2" stroke-linecap="butt" stroke-linejoin="miter"/>
<polyline points="407.23,168.97 411.38,168.97 411.38,185.55 423.82,185.55" fill="none" stroke="#0a6a0a" stroke-width="1.2" stroke-linecap="butt" stroke-linejoin="miter"/>
<polyline points="407.23,173.12 407.23,193.85 423.82,193.85" fill="none" stroke="#0a6a0a" stroke-width="1.2" stroke-linecap="butt" stroke-linejoin="miter"/>
<line x1="407.23" y1="173.12" x2="401.43" y2="173.12" stroke="#0a6a0a" stroke-width="1.2"/>
<line x1="407.23" y1="168.97" x2="401.43" y2="168.97" stroke="#0a6a0a" stroke-width="1.2"/>
<line x1="407.23" y1="164.82" x2="401.43" y2="164.82" stroke="#0a6a0a" stroke-width="1.2"/>
<line x1="407.23" y1="160.68" x2="401.43" y2="160.68" stroke="#0a6a0a" stroke-width="1.2"/>
<line x1="407.23" y1="156.53" x2="401.43" y2="156.53" stroke="#0a6a0a" stroke-width="1.2"/>
<line x1="407.23" y1="152.38" x2="401.43" y2="152.38" stroke="#0a6a0a" stroke-width="1.2"/>
<line x1="407.23" y1="148.24" x2="401.43" y2="148.24" stroke="#0a6a0a" stroke-width="1.2"/>
<line x1="407.23" y1="144.09" x2="401.43" y2="144.09" stroke="#0a6a0a" stroke-width="1.2"/>
<polyline points="398.94,177.26 401.43,173.12 401.43,144.09" fill="none" stroke="#000" stroke-width="1.8" stroke-linejoin="round" stroke-linecap="butt"/>
<polygon points="423.82,168.97 425.48,166.87 425.48,164.87 434.08,164.87 434.08,173.07 425.48,173.07 425.48,171.07" fill="#fff" stroke="#1c1c1c" stroke-width="0.9" stroke-linejoin="round"/>
<text x="429.93" y="170.47" font-size="4.1" font-weight="bold" fill="#000" font-family='"DejaVu Sans Condensed","DejaVu Sans","Liberation Sans",sans-serif' text-anchor="middle" transform="rotate(0.04 429.93 170.47)" >IR4</text>
<polygon points="423.82,177.26 425.48,175.16 425.48,173.16 434.08,173.16 434.08,181.36 425.48,181.36 425.48,179.36" fill="#fff" stroke="#1c1c1c" stroke-width="0.9" stroke-linejoin="round"/>
<text x="429.93" y="178.76" font-size="4.1" font-weight="bold" fill="#000" font-family='"DejaVu Sans Condensed","DejaVu Sans","Liberation Sans",sans-serif' text-anchor="middle" transform="rotate(0.04 429.93 178.76)" >IR5</text>
<polygon points="423.82,185.55 425.48,183.45 425.48,181.45 434.08,181.45 434.08,189.65 425.48,189.65 425.48,187.65" fill="#fff" stroke="#1c1c1c" stroke-width="0.9" stroke-linejoin="round"/>
<text x="429.93" y="187.05" font-size="4.1" font-weight="bold" fill="#000" font-family='"DejaVu Sans Condensed","DejaVu Sans","Liberation Sans",sans-serif' text-anchor="middle" transform="rotate(0.04 429.93 187.05)" >IR6</text>
<polygon points="423.82,193.85 425.48,191.75 425.48,189.75 434.08,189.75 434.08,197.95 425.48,197.95 425.48,195.95" fill="#fff" stroke="#1c1c1c" stroke-width="0.9" stroke-linejoin="round"/>
<text x="429.93" y="195.34" font-size="4.1" font-weight="bold" fill="#000" font-family='"DejaVu Sans Condensed","DejaVu Sans","Liberation Sans",sans-serif' text-anchor="middle" transform="rotate(0.04 429.93 195.34)" >IR7</text>
<polyline points="444.56,160.68 444.56,185.55" fill="none" stroke="#0a6a0a" stroke-width="1.2" stroke-linecap="butt" stroke-linejoin="miter"/>
<circle cx="444.56" cy="164.82" r="2.0" fill="#0a6a0a"/>
<circle cx="444.56" cy="168.97" r="2.0" fill="#0a6a0a"/>
<circle cx="444.56" cy="173.12" r="2.0" fill="#0a6a0a"/>
<line x1="444.56" y1="144.09" x2="450.37" y2="144.09" stroke="#0a6a0a" stroke-width="1.2"/>
<line x1="444.56" y1="148.24" x2="450.37" y2="148.24" stroke="#0a6a0a" stroke-width="1.2"/>
<line x1="444.56" y1="152.38" x2="450.37" y2="152.38" stroke="#0a6a0a" stroke-width="1.2"/>
<line x1="444.56" y1="156.53" x2="450.37" y2="156.53" stroke="#0a6a0a" stroke-width="1.2"/>
<line x1="444.56" y1="160.68" x2="450.37" y2="160.68" stroke="#0a6a0a" stroke-width="1.2"/>
<line x1="444.56" y1="164.82" x2="450.37" y2="164.82" stroke="#0a6a0a" stroke-width="1.2"/>
<line x1="444.56" y1="168.97" x2="450.37" y2="168.97" stroke="#0a6a0a" stroke-width="1.2"/>
<line x1="444.56" y1="173.12" x2="450.37" y2="173.12" stroke="#0a6a0a" stroke-width="1.2"/>
<polyline points="452.86,139.94 450.37,144.09 450.37,173.12" fill="none" stroke="#000" stroke-width="1.8" stroke-linejoin="round" stroke-linecap="butt"/>
<circle cx="441.46" cy="185.55" r="2.7" fill="#e3e3e3"/>
<text x="441.46" y="187.45" font-size="5.2" font-weight="bold" fill="#1a7a1a" font-family='"Liberation Sans",sans-serif' text-anchor="middle" transform="rotate(0.04 441.46 187.45)" >0</text>
<path d="M469.75 136.84L475.85 139.94L469.75 143.04Z" fill="#fff" stroke="#1c1c1c" stroke-width="0.9" stroke-linejoin="miter"/>
<line x1="475.85" y1="139.94" x2="477.74" y2="139.94" stroke="#000" stroke-width="1.8"/>
<polyline points="473.6,144.09 473.6,141.6" fill="none" stroke="#0a6a0a" stroke-width="1.2" stroke-linecap="butt" stroke-linejoin="miter"/>
<polygon points="473.6,144.09 469.1,145.59 468.7,145.59 468.7,156.09 478.5,156.09 478.5,145.59 478.1,145.59" fill="#fff" stroke="#1c1c1c" stroke-width="0.9" stroke-linejoin="round"/>
<text x="473.6" y="153.32" font-size="6.8" font-weight="bold" fill="#000" font-family='"DejaVu Sans Condensed","DejaVu Sans","Liberation Sans",sans-serif' text-anchor="middle" transform="rotate(0.04 473.6 153.32)" >IO</text>
<path d="M507.13 161.03H523.5V185.5H507.13Z" fill="#fff" stroke="#2a2a2a" stroke-width="0.65"/>
<path d="M505.63 159.53H522.5V184.5H505.63Z" fill="#fff" stroke="#2a2a2a" stroke-width="0.65"/>
<path d="M504.13 158.03H520.5V182.5H504.13Z" fill="#fff" stroke="#2a2a2a" stroke-width="0.65"/>
<line x1="510.92" y1="181.41" x2="510.92" y2="185.61" stroke="#3a3a3a" stroke-width="0.75"/>
<line x1="498.48" y1="160.68" x2="502.63" y2="160.68" stroke="#000" stroke-width="1.8"/>
<line x1="519.22" y1="160.68" x2="523.37" y2="160.68" stroke="#000" stroke-width="1.8"/>
<rect x="502.63" y="156.53" width="16.59" height="24.88" fill="#fff" stroke="#1c1c1c" stroke-width="1"/>
<text x="506.03" y="162.58" font-size="5.4" font-weight="normal" fill="#333" font-family='"Liberation Sans",sans-serif' text-anchor="middle" transform="rotate(0.04 506.03 162.58)" >D</text>
<text x="515.42" y="162.58" font-size="5.4" font-weight="normal" fill="#333" font-family='"Liberation Sans",sans-serif' text-anchor="middle" transform="rotate(0.04 515.42 162.58)" >Q</text>
<text x="503.43" y="170.87" font-size="5.3" font-weight="normal" fill="#222" font-family='"DejaVu Sans Condensed","DejaVu Sans","Liberation Sans",sans-serif' text-anchor="start" transform="rotate(0.04 503.43 170.87)" >WE</text>
<text x="504.03" y="179.26" font-size="5.6" font-weight="normal" fill="#555" font-family='"Liberation Sans",sans-serif' text-anchor="start" transform="rotate(0.04 504.03 179.26)" >E</text>
<text x="511.52" y="179.26" font-size="5.4" font-weight="normal" fill="#b4b4b4" font-family='"Liberation Sans",sans-serif' text-anchor="middle" transform="rotate(0.04 511.52 179.26)" >R</text>
<path d="M505.92 148.33L515.92 148.33L514.22 149.73H507.62Z" fill="#d9d9d9"/>
<rect x="507.22" y="149.33" width="7.4" height="5.2" fill="#c9c9c9"/>
<text x="510.92" y="153.68" font-size="4.9" font-weight="normal" fill="#6a6a6a" font-family='"Liberation Sans",sans-serif' text-anchor="middle" transform="rotate(0.04 510.92 153.68)" >00</text>
<text x="503" y="145.6" font-size="6.7" font-weight="bold" fill="#1a1aff" font-family='"DejaVu Sans Condensed","DejaVu Sans","Liberation Sans",sans-serif' text-anchor="start" textLength="15.6" lengthAdjust="spacingAndGlyphs" transform="rotate(0.04 503 145.6)" >MAR</text>
<polygon points="494.33,168.97 492.67,166.87 492.67,164.87 485.77,164.87 485.77,173.07 492.67,173.07 492.67,171.07" fill="#fff" stroke="#1c1c1c" stroke-width="0.9" stroke-linejoin="round"/>
<text x="489.07" y="170.47" font-size="4.1" font-weight="bold" fill="#000" font-family='"DejaVu Sans Condensed","DejaVu Sans","Liberation Sans",sans-serif' text-anchor="middle" transform="rotate(0.04 489.07 170.47)" >MI</text>
<polyline points="494.33,168.97 502.63,168.97" fill="none" stroke="#00d200" stroke-width="1.2" stroke-linecap="butt" stroke-linejoin="miter"/>
<polygon points="494.33,177.26 492.67,175.16 492.67,173.16 482.07,173.16 482.07,181.36 492.67,181.36 492.67,179.36" fill="#fff" stroke="#1c1c1c" stroke-width="0.9" stroke-linejoin="round"/>
<text x="487.22" y="178.76" font-size="4.1" font-weight="bold" fill="#000" font-family='"DejaVu Sans Condensed","DejaVu Sans","Liberation Sans",sans-serif' text-anchor="middle" transform="rotate(0.04 487.22 178.76)" >CLK</text>
<polyline points="494.33,177.26 502.63,177.26" fill="none" stroke="#0a6a0a" stroke-width="1.2" stroke-linecap="butt" stroke-linejoin="miter"/>
<polyline points="531.66,164.82 532.49,164.82" fill="none" stroke="#0a6a0a" stroke-width="1.2" stroke-linecap="butt" stroke-linejoin="miter"/>
<polyline points="531.66,168.97 532.49,168.97" fill="none" stroke="#0a6a0a" stroke-width="1.2" stroke-linecap="butt" stroke-linejoin="miter"/>
<polyline points="531.66,173.12 532.49,173.12" fill="none" stroke="#0a6a0a" stroke-width="1.2" stroke-linecap="butt" stroke-linejoin="miter"/>
<polyline points="531.66,177.26 532.49,177.26" fill="none" stroke="#0a6a0a" stroke-width="1.2" stroke-linecap="butt" stroke-linejoin="miter"/>
<line x1="531.66" y1="164.82" x2="525.85" y2="164.82" stroke="#0a6a0a" stroke-width="1.2"/>
<line x1="531.66" y1="168.97" x2="525.85" y2="168.97" stroke="#0a6a0a" stroke-width="1.2"/>
<line x1="531.66" y1="173.12" x2="525.85" y2="173.12" stroke="#0a6a0a" stroke-width="1.2"/>
<line x1="531.66" y1="177.26" x2="525.85" y2="177.26" stroke="#0a6a0a" stroke-width="1.2"/>
<line x1="531.66" y1="181.41" x2="525.85" y2="181.41" stroke="#0a6a0a" stroke-width="1.2"/>
<line x1="531.66" y1="185.55" x2="525.85" y2="185.55" stroke="#0a6a0a" stroke-width="1.2"/>
<line x1="531.66" y1="189.7" x2="525.85" y2="189.7" stroke="#0a6a0a" stroke-width="1.2"/>
<line x1="531.66" y1="193.85" x2="525.85" y2="193.85" stroke="#0a6a0a" stroke-width="1.2"/>
<polyline points="523.37,160.68 525.85,164.82 525.85,193.85" fill="none" stroke="#000" stroke-width="1.8" stroke-linejoin="round" stroke-linecap="butt"/>
<line x1="531.66" y1="164.82" x2="537.47" y2="164.82" stroke="#0a6a0a" stroke-width="1.2"/>
<line x1="531.66" y1="168.97" x2="537.47" y2="168.97" stroke="#0a6a0a" stroke-width="1.2"/>
<line x1="531.66" y1="173.12" x2="537.47" y2="173.12" stroke="#0a6a0a" stroke-width="1.2"/>
<line x1="531.66" y1="177.26" x2="537.47" y2="177.26" stroke="#0a6a0a" stroke-width="1.2"/>
<polyline points="539.96,160.68 537.47,164.82 537.47,177.26" fill="none" stroke="#000" stroke-width="1.8" stroke-linejoin="round" stroke-linecap="butt"/>
<text x="648" y="95" font-size="6.7" font-weight="bold" fill="#000" font-family='"DejaVu Sans","Liberation Sans",sans-serif' text-anchor="middle" textLength="38.5" lengthAdjust="spacingAndGlyphs" transform="rotate(0.04 648 95)" >RAM16Byte</text>
<path d="M598.02 102.63L600.62 106.03V113.63L603.42 116.03H606.32" fill="none" stroke="#000" stroke-width="1.8" stroke-linejoin="round"/>
<path d="M600.62 106.03L603.42 107.03H606.32" fill="none" stroke="#000" stroke-width="1.4"/>
<rect x="601.62" y="107.03" width="4.7" height="9" fill="#fff" stroke="#000" stroke-width="0.8"/>
<path d="M606.32 98.48H689.27V127.6H685.47V131.6H610.12V127.6H606.32Z" fill="#fff" stroke="#1c1c1c" stroke-width="0.95"/>
<text x="647.8" y="103.9" font-size="5.4" font-weight="normal" fill="#222" font-family='"Liberation Sans",sans-serif' text-anchor="middle" textLength="28" lengthAdjust="spacingAndGlyphs" transform="rotate(0.04 647.8 103.9)" >RAM 16 x 8</text>
<text x="607.42" y="109.33" font-size="5.3" font-weight="normal" fill="#555" font-family='"Liberation Sans",sans-serif' text-anchor="start" transform="rotate(0.04 607.42 109.33)" >0</text>
<text x="607.42" y="117.83" font-size="5.3" font-weight="normal" fill="#555" font-family='"Liberation Sans",sans-serif' text-anchor="start" transform="rotate(0.04 607.42 117.83)" >3</text>
<path d="M614.4 104.6c1.8 0.6 1.2 3.6 1.8 5.2 0.3 0.9 0.9 1.2 1.5 1.3-0.6 0.1-1.2 0.4-1.5 1.3-0.6 1.6 0 4.6-1.8 5.2" fill="none" stroke="#333" stroke-width="0.6"/>
<text x="620.2" y="114" font-size="5.4" font-weight="normal" fill="#222" font-family='"Liberation Sans",sans-serif' text-anchor="middle" transform="rotate(0.04 620.2 114)" >A</text>
<text x="626.2" y="108.7" font-size="5.4" font-weight="normal" fill="#222" font-family='"Liberation Sans",sans-serif' text-anchor="middle" transform="rotate(0.04 626.2 108.7)" >0</text>
<line x1="623.6" y1="110.6" x2="628.8" y2="110.6" stroke="#333" stroke-width="0.6"/>
<text x="626.4" y="116.5" font-size="5.2" font-weight="normal" fill="#222" font-family='"Liberation Sans",sans-serif' text-anchor="middle" transform="rotate(0.04 626.4 116.5)" >15</text>
<text x="612" y="121" font-size="5.0" font-weight="normal" fill="#222" font-family='"Liberation Sans",sans-serif' text-anchor="start" textLength="40.7" lengthAdjust="spacingAndGlyphs" transform="rotate(0.04 612 121)" >M2 [Write enable]</text>
<text x="612" y="125.5" font-size="5.0" font-weight="normal" fill="#222" font-family='"Liberation Sans",sans-serif' text-anchor="start" textLength="45" lengthAdjust="spacingAndGlyphs" transform="rotate(0.04 612 125.5)" >M1 [Output enable]</text>
<path d="M597.62 131.65L600.2 134.05V193.94" fill="none" stroke="#000" stroke-width="2.05" stroke-linejoin="round"/>
<path d="M697.97 131.65H697.6L695.6 134.05V193.94" fill="none" stroke="#000" stroke-width="2.05" stroke-linejoin="round"/>
<rect x="606.32" y="131.6" width="82.95" height="8.31" fill="#fff" stroke="#222" stroke-width="1.2"/>
<path d="M600.2 134Q600.6 135.6 602.4 135.6H606.32" fill="none" stroke="#111" stroke-width="1.05"/>
<path d="M695.6 134Q695.2 135.6 693.4 135.6H689.27" fill="none" stroke="#111" stroke-width="1.05"/>
<text x="603.6" y="134.2" font-size="2.6" font-weight="normal" fill="#777" font-family='"Liberation Sans",sans-serif' text-anchor="middle" transform="rotate(0.04 603.6 134.2)" >0</text>
<text x="692.2" y="134.2" font-size="2.6" font-weight="normal" fill="#777" font-family='"Liberation Sans",sans-serif' text-anchor="middle" transform="rotate(0.04 692.2 134.2)" >0</text>
<text x="607.62" y="137.3" font-size="4.4" font-weight="normal" fill="#222" font-family='"Liberation Sans",sans-serif' text-anchor="start" textLength="5.6" lengthAdjust="spacingAndGlyphs" transform="rotate(0.04 607.62 137.3)" >A,2</text>
<text x="687.97" y="137.3" font-size="4.4" font-weight="normal" fill="#222" font-family='"Liberation Sans",sans-serif' text-anchor="end" textLength="5.8" lengthAdjust="spacingAndGlyphs" transform="rotate(0.04 687.97 137.3)" >A,1</text>
<rect x="606.32" y="139.91" width="82.95" height="8.31" fill="#fff" stroke="#222" stroke-width="1.2"/>
<path d="M600.2 142.31Q600.6 143.91 602.4 143.91H606.32" fill="none" stroke="#111" stroke-width="1.05"/>
<path d="M695.6 142.31Q695.2 143.91 693.4 143.91H689.27" fill="none" stroke="#111" stroke-width="1.05"/>
<text x="603.6" y="142.51" font-size="2.6" font-weight="normal" fill="#777" font-family='"Liberation Sans",sans-serif' text-anchor="middle" transform="rotate(0.04 603.6 142.51)" >1</text>
<text x="692.2" y="142.51" font-size="2.6" font-weight="normal" fill="#777" font-family='"Liberation Sans",sans-serif' text-anchor="middle" transform="rotate(0.04 692.2 142.51)" >1</text>
<text x="607.62" y="145.61" font-size="4.4" font-weight="normal" fill="#222" font-family='"Liberation Sans",sans-serif' text-anchor="start" textLength="5.6" lengthAdjust="spacingAndGlyphs" transform="rotate(0.04 607.62 145.61)" >A,2</text>
<text x="687.97" y="145.61" font-size="4.4" font-weight="normal" fill="#222" font-family='"Liberation Sans",sans-serif' text-anchor="end" textLength="5.8" lengthAdjust="spacingAndGlyphs" transform="rotate(0.04 687.97 145.61)" >A,1</text>
<rect x="606.32" y="148.22" width="82.95" height="8.31" fill="#fff" stroke="#222" stroke-width="1.2"/>
<path d="M600.2 150.62Q600.6 152.22 602.4 152.22H606.32" fill="none" stroke="#111" stroke-width="1.05"/>
<path d="M695.6 150.62Q695.2 152.22 693.4 152.22H689.27" fill="none" stroke="#111" stroke-width="1.05"/>
<text x="603.6" y="150.82" font-size="2.6" font-weight="normal" fill="#777" font-family='"Liberation Sans",sans-serif' text-anchor="middle" transform="rotate(0.04 603.6 150.82)" >2</text>
<text x="692.2" y="150.82" font-size="2.6" font-weight="normal" fill="#777" font-family='"Liberation Sans",sans-serif' text-anchor="middle" transform="rotate(0.04 692.2 150.82)" >2</text>
<text x="607.62" y="153.92" font-size="4.4" font-weight="normal" fill="#222" font-family='"Liberation Sans",sans-serif' text-anchor="start" textLength="5.6" lengthAdjust="spacingAndGlyphs" transform="rotate(0.04 607.62 153.92)" >A,2</text>
<text x="687.97" y="153.92" font-size="4.4" font-weight="normal" fill="#222" font-family='"Liberation Sans",sans-serif' text-anchor="end" textLength="5.8" lengthAdjust="spacingAndGlyphs" transform="rotate(0.04 687.97 153.92)" >A,1</text>
<rect x="606.32" y="156.54" width="82.95" height="8.31" fill="#fff" stroke="#222" stroke-width="1.2"/>
<path d="M600.2 158.94Q600.6 160.54 602.4 160.54H606.32" fill="none" stroke="#111" stroke-width="1.05"/>
<path d="M695.6 158.94Q695.2 160.54 693.4 160.54H689.27" fill="none" stroke="#111" stroke-width="1.05"/>
<text x="603.6" y="159.14" font-size="2.6" font-weight="normal" fill="#777" font-family='"Liberation Sans",sans-serif' text-anchor="middle" transform="rotate(0.04 603.6 159.14)" >3</text>
<text x="692.2" y="159.14" font-size="2.6" font-weight="normal" fill="#777" font-family='"Liberation Sans",sans-serif' text-anchor="middle" transform="rotate(0.04 692.2 159.14)" >3</text>
<text x="607.62" y="162.24" font-size="4.4" font-weight="normal" fill="#222" font-family='"Liberation Sans",sans-serif' text-anchor="start" textLength="5.6" lengthAdjust="spacingAndGlyphs" transform="rotate(0.04 607.62 162.24)" >A,2</text>
<text x="687.97" y="162.24" font-size="4.4" font-weight="normal" fill="#222" font-family='"Liberation Sans",sans-serif' text-anchor="end" textLength="5.8" lengthAdjust="spacingAndGlyphs" transform="rotate(0.04 687.97 162.24)" >A,1</text>
<rect x="606.32" y="164.85" width="82.95" height="8.31" fill="#fff" stroke="#222" stroke-width="1.2"/>
<path d="M600.2 167.25Q600.6 168.85 602.4 168.85H606.32" fill="none" stroke="#111" stroke-width="1.05"/>
<path d="M695.6 167.25Q695.2 168.85 693.4 168.85H689.27" fill="none" stroke="#111" stroke-width="1.05"/>
<text x="603.6" y="167.45" font-size="2.6" font-weight="normal" fill="#777" font-family='"Liberation Sans",sans-serif' text-anchor="middle" transform="rotate(0.04 603.6 167.45)" >4</text>
<text x="692.2" y="167.45" font-size="2.6" font-weight="normal" fill="#777" font-family='"Liberation Sans",sans-serif' text-anchor="middle" transform="rotate(0.04 692.2 167.45)" >4</text>
<text x="607.62" y="170.55" font-size="4.4" font-weight="normal" fill="#222" font-family='"Liberation Sans",sans-serif' text-anchor="start" textLength="5.6" lengthAdjust="spacingAndGlyphs" transform="rotate(0.04 607.62 170.55)" >A,2</text>
<text x="687.97" y="170.55" font-size="4.4" font-weight="normal" fill="#222" font-family='"Liberation Sans",sans-serif' text-anchor="end" textLength="5.8" lengthAdjust="spacingAndGlyphs" transform="rotate(0.04 687.97 170.55)" >A,1</text>
<rect x="606.32" y="173.16" width="82.95" height="8.31" fill="#fff" stroke="#222" stroke-width="1.2"/>
<path d="M600.2 175.56Q600.6 177.16 602.4 177.16H606.32" fill="none" stroke="#111" stroke-width="1.05"/>
<path d="M695.6 175.56Q695.2 177.16 693.4 177.16H689.27" fill="none" stroke="#111" stroke-width="1.05"/>
<text x="603.6" y="175.76" font-size="2.6" font-weight="normal" fill="#777" font-family='"Liberation Sans",sans-serif' text-anchor="middle" transform="rotate(0.04 603.6 175.76)" >5</text>
<text x="692.2" y="175.76" font-size="2.6" font-weight="normal" fill="#777" font-family='"Liberation Sans",sans-serif' text-anchor="middle" transform="rotate(0.04 692.2 175.76)" >5</text>
<text x="607.62" y="178.86" font-size="4.4" font-weight="normal" fill="#222" font-family='"Liberation Sans",sans-serif' text-anchor="start" textLength="5.6" lengthAdjust="spacingAndGlyphs" transform="rotate(0.04 607.62 178.86)" >A,2</text>
<text x="687.97" y="178.86" font-size="4.4" font-weight="normal" fill="#222" font-family='"Liberation Sans",sans-serif' text-anchor="end" textLength="5.8" lengthAdjust="spacingAndGlyphs" transform="rotate(0.04 687.97 178.86)" >A,1</text>
<rect x="606.32" y="181.47" width="82.95" height="8.31" fill="#fff" stroke="#222" stroke-width="1.2"/>
<path d="M600.2 183.88Q600.6 185.47 602.4 185.47H606.32" fill="none" stroke="#111" stroke-width="1.05"/>
<path d="M695.6 183.88Q695.2 185.47 693.4 185.47H689.27" fill="none" stroke="#111" stroke-width="1.05"/>
<text x="603.6" y="184.07" font-size="2.6" font-weight="normal" fill="#777" font-family='"Liberation Sans",sans-serif' text-anchor="middle" transform="rotate(0.04 603.6 184.07)" >6</text>
<text x="692.2" y="184.07" font-size="2.6" font-weight="normal" fill="#777" font-family='"Liberation Sans",sans-serif' text-anchor="middle" transform="rotate(0.04 692.2 184.07)" >6</text>
<text x="607.62" y="187.17" font-size="4.4" font-weight="normal" fill="#222" font-family='"Liberation Sans",sans-serif' text-anchor="start" textLength="5.6" lengthAdjust="spacingAndGlyphs" transform="rotate(0.04 607.62 187.17)" >A,2</text>
<text x="687.97" y="187.17" font-size="4.4" font-weight="normal" fill="#222" font-family='"Liberation Sans",sans-serif' text-anchor="end" textLength="5.8" lengthAdjust="spacingAndGlyphs" transform="rotate(0.04 687.97 187.17)" >A,1</text>
<rect x="606.32" y="189.79" width="82.95" height="8.31" fill="#fff" stroke="#222" stroke-width="1.2"/>
<path d="M600.2 192.19Q600.6 193.79 602.4 193.79H606.32" fill="none" stroke="#111" stroke-width="1.05"/>
<path d="M695.6 192.19Q695.2 193.79 693.4 193.79H689.27" fill="none" stroke="#111" stroke-width="1.05"/>
<text x="603.6" y="192.39" font-size="2.6" font-weight="normal" fill="#777" font-family='"Liberation Sans",sans-serif' text-anchor="middle" transform="rotate(0.04 603.6 192.39)" >7</text>
<text x="692.2" y="192.39" font-size="2.6" font-weight="normal" fill="#777" font-family='"Liberation Sans",sans-serif' text-anchor="middle" transform="rotate(0.04 692.2 192.39)" >7</text>
<text x="607.62" y="195.49" font-size="4.4" font-weight="normal" fill="#222" font-family='"Liberation Sans",sans-serif' text-anchor="start" textLength="5.6" lengthAdjust="spacingAndGlyphs" transform="rotate(0.04 607.62 195.49)" >A,2</text>
<text x="687.97" y="195.49" font-size="4.4" font-weight="normal" fill="#222" font-family='"Liberation Sans",sans-serif' text-anchor="end" textLength="5.8" lengthAdjust="spacingAndGlyphs" transform="rotate(0.04 687.97 195.49)" >A,1</text>
<rect x="623.2" y="133.9" width="49.2" height="23.1" fill="#b9bdb9"/>
<rect x="626.9" y="134.6" width="7.2" height="6.6" fill="#111"/>
<text x="625.2" y="139.9" font-size="5.4" font-weight="normal" fill="#111" font-family='"Liberation Sans",sans-serif' text-anchor="middle" transform="rotate(0.04 625.2 139.9)" >0</text>
<text x="630.5" y="139.9" font-size="5.4" font-weight="normal" fill="#fff" font-family='"Liberation Sans",sans-serif' text-anchor="middle" textLength="6.2" lengthAdjust="spacingAndGlyphs" transform="rotate(0.04 630.5 139.9)" >00</text>
<text x="638.05" y="139.9" font-size="5.4" font-weight="normal" fill="#111" font-family='"Liberation Sans",sans-serif' text-anchor="middle" textLength="6.2" lengthAdjust="spacingAndGlyphs" transform="rotate(0.04 638.05 139.9)" >00</text>
<text x="645.6" y="139.9" font-size="5.4" font-weight="normal" fill="#111" font-family='"Liberation Sans",sans-serif' text-anchor="middle" textLength="6.2" lengthAdjust="spacingAndGlyphs" transform="rotate(0.04 645.6 139.9)" >00</text>
<text x="653.15" y="139.9" font-size="5.4" font-weight="normal" fill="#111" font-family='"Liberation Sans",sans-serif' text-anchor="middle" textLength="6.2" lengthAdjust="spacingAndGlyphs" transform="rotate(0.04 653.15 139.9)" >00</text>
<text x="660.7" y="139.9" font-size="5.4" font-weight="normal" fill="#111" font-family='"Liberation Sans",sans-serif' text-anchor="middle" textLength="6.2" lengthAdjust="spacingAndGlyphs" transform="rotate(0.04 660.7 139.9)" >00</text>
<text x="668.25" y="139.9" font-size="5.4" font-weight="normal" fill="#111" font-family='"Liberation Sans",sans-serif' text-anchor="middle" textLength="6.2" lengthAdjust="spacingAndGlyphs" transform="rotate(0.04 668.25 139.9)" >00</text>
<text x="625.2" y="148.1" font-size="5.4" font-weight="normal" fill="#111" font-family='"Liberation Sans",sans-serif' text-anchor="middle" transform="rotate(0.04 625.2 148.1)" >6</text>
<text x="630.5" y="148.1" font-size="5.4" font-weight="normal" fill="#111" font-family='"Liberation Sans",sans-serif' text-anchor="middle" textLength="6.2" lengthAdjust="spacingAndGlyphs" transform="rotate(0.04 630.5 148.1)" >00</text>
<text x="638.05" y="148.1" font-size="5.4" font-weight="normal" fill="#111" font-family='"Liberation Sans",sans-serif' text-anchor="middle" textLength="6.2" lengthAdjust="spacingAndGlyphs" transform="rotate(0.04 638.05 148.1)" >00</text>
<text x="645.6" y="148.1" font-size="5.4" font-weight="normal" fill="#111" font-family='"Liberation Sans",sans-serif' text-anchor="middle" textLength="6.2" lengthAdjust="spacingAndGlyphs" transform="rotate(0.04 645.6 148.1)" >00</text>
<text x="653.15" y="148.1" font-size="5.4" font-weight="normal" fill="#111" font-family='"Liberation Sans",sans-serif' text-anchor="middle" textLength="6.2" lengthAdjust="spacingAndGlyphs" transform="rotate(0.04 653.15 148.1)" >00</text>
<text x="660.7" y="148.1" font-size="5.4" font-weight="normal" fill="#111" font-family='"Liberation Sans",sans-serif' text-anchor="middle" textLength="6.2" lengthAdjust="spacingAndGlyphs" transform="rotate(0.04 660.7 148.1)" >00</text>
<text x="668.25" y="148.1" font-size="5.4" font-weight="normal" fill="#111" font-family='"Liberation Sans",sans-serif' text-anchor="middle" textLength="6.2" lengthAdjust="spacingAndGlyphs" transform="rotate(0.04 668.25 148.1)" >00</text>
<text x="625.2" y="155.9" font-size="5.4" font-weight="normal" fill="#111" font-family='"Liberation Sans",sans-serif' text-anchor="middle" transform="rotate(0.04 625.2 155.9)" >c</text>
<text x="630.5" y="155.9" font-size="5.4" font-weight="normal" fill="#111" font-family='"Liberation Sans",sans-serif' text-anchor="middle" textLength="6.2" lengthAdjust="spacingAndGlyphs" transform="rotate(0.04 630.5 155.9)" >00</text>
<text x="638.05" y="155.9" font-size="5.4" font-weight="normal" fill="#111" font-family='"Liberation Sans",sans-serif' text-anchor="middle" textLength="6.2" lengthAdjust="spacingAndGlyphs" transform="rotate(0.04 638.05 155.9)" >00</text>
<text x="645.6" y="155.9" font-size="5.4" font-weight="normal" fill="#111" font-family='"Liberation Sans",sans-serif' text-anchor="middle" textLength="6.2" lengthAdjust="spacingAndGlyphs" transform="rotate(0.04 645.6 155.9)" >00</text>
<text x="653.15" y="155.9" font-size="5.4" font-weight="normal" fill="#111" font-family='"Liberation Sans",sans-serif' text-anchor="middle" textLength="6.2" lengthAdjust="spacingAndGlyphs" transform="rotate(0.04 653.15 155.9)" >00</text>
<polyline points="739.04,98.48 751.48,98.48" fill="none" stroke="#0a6a0a" stroke-width="1.2" stroke-linecap="butt" stroke-linejoin="miter"/>
<polyline points="739.04,102.63 751.48,102.63" fill="none" stroke="#0a6a0a" stroke-width="1.2" stroke-linecap="butt" stroke-linejoin="miter"/>
<polyline points="739.04,106.77 751.48,106.77" fill="none" stroke="#0a6a0a" stroke-width="1.2" stroke-linecap="butt" stroke-linejoin="miter"/>
<polyline points="739.04,110.92 751.48,110.92" fill="none" stroke="#0a6a0a" stroke-width="1.2" stroke-linecap="butt" stroke-linejoin="miter"/>
<polyline points="751.48,115.07 751.48,135.8 747.34,135.8" fill="none" stroke="#0a6a0a" stroke-width="1.2" stroke-linecap="butt" stroke-linejoin="miter"/>
<circle cx="751.48" cy="119.21" r="2.0" fill="#0a6a0a"/>
<circle cx="751.48" cy="123.36" r="2.0" fill="#0a6a0a"/>
<circle cx="751.48" cy="127.51" r="2.0" fill="#0a6a0a"/>
<line x1="739.04" y1="127.51" x2="733.23" y2="127.51" stroke="#0a6a0a" stroke-width="1.2"/>
<line x1="739.04" y1="123.36" x2="733.23" y2="123.36" stroke="#0a6a0a" stroke-width="1.2"/>
<line x1="739.04" y1="119.21" x2="733.23" y2="119.21" stroke="#0a6a0a" stroke-width="1.2"/>
<line x1="739.04" y1="115.07" x2="733.23" y2="115.07" stroke="#0a6a0a" stroke-width="1.2"/>
<line x1="739.04" y1="110.92" x2="733.23" y2="110.92" stroke="#0a6a0a" stroke-width="1.2"/>
<line x1="739.04" y1="106.77" x2="733.23" y2="106.77" stroke="#0a6a0a" stroke-width="1.2"/>
<line x1="739.04" y1="102.63" x2="733.23" y2="102.63" stroke="#0a6a0a" stroke-width="1.2"/>
<line x1="739.04" y1="98.48" x2="733.23" y2="98.48" stroke="#0a6a0a" stroke-width="1.2"/>
<polyline points="730.75,131.65 733.23,127.51 733.23,98.48" fill="none" stroke="#000" stroke-width="1.8" stroke-linejoin="round" stroke-linecap="butt"/>
<line x1="751.48" y1="98.48" x2="757.29" y2="98.48" stroke="#0a6a0a" stroke-width="1.2"/>
<line x1="751.48" y1="102.63" x2="757.29" y2="102.63" stroke="#0a6a0a" stroke-width="1.2"/>
<line x1="751.48" y1="106.77" x2="757.29" y2="106.77" stroke="#0a6a0a" stroke-width="1.2"/>
<line x1="751.48" y1="110.92" x2="757.29" y2="110.92" stroke="#0a6a0a" stroke-width="1.2"/>
<line x1="751.48" y1="115.07" x2="757.29" y2="115.07" stroke="#0a6a0a" stroke-width="1.2"/>
<line x1="751.48" y1="119.21" x2="757.29" y2="119.21" stroke="#0a6a0a" stroke-width="1.2"/>
<line x1="751.48" y1="123.36" x2="757.29" y2="123.36" stroke="#0a6a0a" stroke-width="1.2"/>
<line x1="751.48" y1="127.51" x2="757.29" y2="127.51" stroke="#0a6a0a" stroke-width="1.2"/>
<polyline points="759.78,94.33 757.29,98.48 757.29,127.51" fill="none" stroke="#000" stroke-width="1.8" stroke-linejoin="round" stroke-linecap="butt"/>
<circle cx="744.24" cy="135.8" r="2.7" fill="#e3e3e3"/>
<text x="744.24" y="137.7" font-size="5.2" font-weight="bold" fill="#1a7a1a" font-family='"Liberation Sans",sans-serif' text-anchor="middle" transform="rotate(0.04 744.24 137.7)" >0</text>
<polyline points="695.08,131.65 705.86,131.65" fill="none" stroke="#000" stroke-width="1.8" stroke-linecap="square" stroke-linejoin="miter"/>
<path d="M706.16 128.55L712.26 131.65L706.16 134.75Z" fill="#fff" stroke="#1c1c1c" stroke-width="0.9" stroke-linejoin="miter"/>
<line x1="712.26" y1="131.65" x2="714.16" y2="131.65" stroke="#000" stroke-width="1.8"/>
<polyline points="593.88,127.51 593.88,86.04 710.01,86.04 710.01,129.16" fill="none" stroke="#0a6a0a" stroke-width="1.2" stroke-linecap="butt" stroke-linejoin="miter"/>
<polyline points="598.02,119.21 606.32,119.21" fill="none" stroke="#111" stroke-width="1.0" stroke-linecap="butt" stroke-linejoin="miter"/>
<polyline points="598.02,123.36 606.32,123.36" fill="none" stroke="#111" stroke-width="1.0" stroke-linecap="butt" stroke-linejoin="miter"/>
<polygon points="589.73,119.21 588.07,117.11 588.07,115.11 581.37,115.11 581.37,123.31 588.07,123.31 588.07,121.31" fill="#fff" stroke="#1c1c1c" stroke-width="0.9" stroke-linejoin="round"/>
<text x="584.57" y="120.71" font-size="4.1" font-weight="bold" fill="#000" font-family='"DejaVu Sans Condensed","DejaVu Sans","Liberation Sans",sans-serif' text-anchor="middle" transform="rotate(0.04 584.57 120.71)" >RI</text>
<polyline points="589.73,119.21 598.02,119.21" fill="none" stroke="#0a6a0a" stroke-width="1.2" stroke-linecap="butt" stroke-linejoin="miter"/>
<polygon points="589.73,127.51 588.07,125.41 588.07,123.41 579.27,123.41 579.27,131.61 588.07,131.61 588.07,129.61" fill="#fff" stroke="#1c1c1c" stroke-width="0.9" stroke-linejoin="round"/>
<text x="583.52" y="129" font-size="4.1" font-weight="bold" fill="#000" font-family='"DejaVu Sans Condensed","DejaVu Sans","Liberation Sans",sans-serif' text-anchor="middle" transform="rotate(0.04 583.52 129)" >RO</text>
<polyline points="589.73,127.51 598.02,127.51 598.02,123.36" fill="none" stroke="#0a6a0a" stroke-width="1.2" stroke-linecap="butt" stroke-linejoin="miter"/>
<circle cx="593.88" cy="127.51" r="2.0" fill="#0a6a0a"/>
<rect x="382.35" y="218.73" width="82.95" height="53.9" fill="#dd4fa6" stroke="#8c5a7c" stroke-width="0.8"/>
<text x="423" y="234.3" font-size="12" font-weight="bold" fill="#fff" font-family='"DejaVu Sans","Liberation Sans",sans-serif' text-anchor="middle" textLength="15.8" lengthAdjust="spacingAndGlyphs" transform="rotate(0.04 423 234.3)" >PC</text>
<text x="385.65" y="224.47" font-size="5.1" font-weight="normal" fill="#3a0a2a" font-family='"DejaVu Sans Condensed","DejaVu Sans","Liberation Sans",sans-serif' text-anchor="start" textLength="8.6" lengthAdjust="spacingAndGlyphs" transform="rotate(0.04 385.65 224.47)" stroke="#3a0a2a" stroke-width="0.22">CLK</text>
<text x="385.65" y="232.77" font-size="5.1" font-weight="normal" fill="#3a0a2a" font-family='"DejaVu Sans Condensed","DejaVu Sans","Liberation Sans",sans-serif' text-anchor="start" textLength="6.6" lengthAdjust="spacingAndGlyphs" transform="rotate(0.04 385.65 232.77)" stroke="#3a0a2a" stroke-width="0.22">CO</text>
<text x="384.95" y="245.1" font-size="5.1" font-weight="normal" fill="#3a0a2a" font-family='"DejaVu Sans Condensed","DejaVu Sans","Liberation Sans",sans-serif' text-anchor="start" textLength="34" lengthAdjust="spacingAndGlyphs" transform="rotate(0.04 384.95 245.1)" stroke="#3a0a2a" stroke-width="0.22">Jump_Address</text>
<text x="385.65" y="257.54" font-size="5.1" font-weight="normal" fill="#3a0a2a" font-family='"DejaVu Sans Condensed","DejaVu Sans","Liberation Sans",sans-serif' text-anchor="start" textLength="12" lengthAdjust="spacingAndGlyphs" transform="rotate(0.04 385.65 257.54)" stroke="#3a0a2a" stroke-width="0.22">Jump</text>
<text x="385.65" y="270.08" font-size="5.1" font-weight="normal" fill="#3a0a2a" font-family='"DejaVu Sans Condensed","DejaVu Sans","Liberation Sans",sans-serif' text-anchor="start" textLength="5.8" lengthAdjust="spacingAndGlyphs" transform="rotate(0.04 385.65 270.08)" stroke="#3a0a2a" stroke-width="0.22">CE</text>
<polygon points="374.05,214.58 372.39,210.08 372.39,208.98 357.39,208.98 357.39,220.18 372.39,220.18 372.39,219.08" fill="#fff" stroke="#1c1c1c" stroke-width="0.9" stroke-linejoin="round"/>
<text x="364.74" y="217.06" font-size="6.8" font-weight="bold" fill="#000" font-family='"DejaVu Sans Condensed","DejaVu Sans","Liberation Sans",sans-serif' text-anchor="middle" transform="rotate(0.04 364.74 217.06)" >CLK</text>
<polyline points="374.05,214.58 378.2,214.58 378.2,222.87 382.35,222.87" fill="none" stroke="#0a6a0a" stroke-width="1.2" stroke-linecap="butt" stroke-linejoin="miter"/>
<polygon points="374.05,231.17 372.39,226.67 372.39,225.57 360.39,225.57 360.39,236.77 372.39,236.77 372.39,235.67" fill="#fff" stroke="#1c1c1c" stroke-width="0.9" stroke-linejoin="round"/>
<text x="366.24" y="233.65" font-size="6.8" font-weight="bold" fill="#000" font-family='"DejaVu Sans Condensed","DejaVu Sans","Liberation Sans",sans-serif' text-anchor="middle" transform="rotate(0.04 366.24 233.65)" >CO</text>
<polyline points="374.05,231.17 382.35,231.17" fill="none" stroke="#00d200" stroke-width="1.2" stroke-linecap="butt" stroke-linejoin="miter"/>
<polygon points="374.05,256.04 372.39,251.54 372.39,250.44 352.19,250.44 352.19,261.64 372.39,261.64 372.39,260.54" fill="#fff" stroke="#1c1c1c" stroke-width="0.9" stroke-linejoin="round"/>
<text x="362.14" y="258.53" font-size="6.8" font-weight="bold" fill="#000" font-family='"DejaVu Sans Condensed","DejaVu Sans","Liberation Sans",sans-serif' text-anchor="middle" transform="rotate(0.04 362.14 258.53)" >JUMP</text>
<polyline points="374.05,256.04 382.35,256.04" fill="none" stroke="#0a6a0a" stroke-width="1.2" stroke-linecap="butt" stroke-linejoin="miter"/>
<polygon points="374.05,268.48 372.39,263.98 372.39,262.88 361.79,262.88 361.79,274.08 372.39,274.08 372.39,272.98" fill="#fff" stroke="#1c1c1c" stroke-width="0.9" stroke-linejoin="round"/>
<text x="366.94" y="270.96" font-size="6.8" font-weight="bold" fill="#000" font-family='"DejaVu Sans Condensed","DejaVu Sans","Liberation Sans",sans-serif' text-anchor="middle" transform="rotate(0.04 366.94 270.96)" >CE</text>
<polyline points="374.05,268.48 382.35,268.48" fill="none" stroke="#0a6a0a" stroke-width="1.2" stroke-linecap="butt" stroke-linejoin="miter"/>
<rect x="374.05" y="305.8" width="91.25" height="74.64" fill="#fde648" stroke="#9a9060" stroke-width="0.8"/>
<text x="419.6" y="346.4" font-size="7.7" font-weight="bold" fill="#000" font-family='"DejaVu Sans","Liberation Sans",sans-serif' text-anchor="middle" textLength="52.6" lengthAdjust="spacingAndGlyphs" transform="rotate(0.04 419.6 346.4)" >Control Unit</text>
<text x="419.68" y="311.7" font-size="5.0" font-weight="bold" fill="#2a2600" font-family='"DejaVu Sans Condensed","DejaVu Sans","Liberation Sans",sans-serif' text-anchor="middle" textLength="9" lengthAdjust="spacingAndGlyphs" transform="rotate(0.04 419.68 311.7)" >CLK</text>
<text x="376.65" y="344.72" font-size="4.8" font-weight="bold" fill="#3a3400" font-family='"DejaVu Sans","Liberation Sans",sans-serif' text-anchor="start" transform="rotate(0.04 376.65 344.72)" >In</text>
<polygon points="419.68,305.8 415.18,304.7 411.68,304.7 411.68,293.8 427.68,293.8 427.68,304.7 424.18,304.7" fill="#fff" stroke="#1c1c1c" stroke-width="0.9" stroke-linejoin="round"/>
<text x="419.68" y="301.73" font-size="6.8" font-weight="bold" fill="#000" font-family='"DejaVu Sans Condensed","DejaVu Sans","Liberation Sans",sans-serif' text-anchor="middle" transform="rotate(0.04 419.68 301.73)" >CLK</text>
<text x="462.9" y="311.25" font-size="3.5" font-weight="bold" fill="#3a3400" font-family='"DejaVu Sans Condensed","DejaVu Sans","Liberation Sans",sans-serif' text-anchor="end" transform="rotate(0.04 462.9 311.25)" >MI</text>
<text x="462.9" y="315.39" font-size="3.5" font-weight="bold" fill="#3a3400" font-family='"DejaVu Sans Condensed","DejaVu Sans","Liberation Sans",sans-serif' text-anchor="end" transform="rotate(0.04 462.9 315.39)" >RI</text>
<text x="462.9" y="319.54" font-size="3.5" font-weight="bold" fill="#3a3400" font-family='"DejaVu Sans Condensed","DejaVu Sans","Liberation Sans",sans-serif' text-anchor="end" transform="rotate(0.04 462.9 319.54)" >RO</text>
<text x="462.9" y="323.69" font-size="3.5" font-weight="bold" fill="#3a3400" font-family='"DejaVu Sans Condensed","DejaVu Sans","Liberation Sans",sans-serif' text-anchor="end" transform="rotate(0.04 462.9 323.69)" >II</text>
<text x="462.9" y="327.83" font-size="3.5" font-weight="bold" fill="#3a3400" font-family='"DejaVu Sans Condensed","DejaVu Sans","Liberation Sans",sans-serif' text-anchor="end" transform="rotate(0.04 462.9 327.83)" >IO</text>
<text x="462.9" y="331.98" font-size="3.5" font-weight="bold" fill="#3a3400" font-family='"DejaVu Sans Condensed","DejaVu Sans","Liberation Sans",sans-serif' text-anchor="end" transform="rotate(0.04 462.9 331.98)" >AI</text>
<text x="462.9" y="336.13" font-size="3.5" font-weight="bold" fill="#3a3400" font-family='"DejaVu Sans Condensed","DejaVu Sans","Liberation Sans",sans-serif' text-anchor="end" transform="rotate(0.04 462.9 336.13)" >AO</text>
<text x="462.9" y="340.27" font-size="3.5" font-weight="bold" fill="#3a3400" font-family='"DejaVu Sans Condensed","DejaVu Sans","Liberation Sans",sans-serif' text-anchor="end" transform="rotate(0.04 462.9 340.27)" >BI</text>
<text x="462.9" y="344.42" font-size="3.5" font-weight="bold" fill="#3a3400" font-family='"DejaVu Sans Condensed","DejaVu Sans","Liberation Sans",sans-serif' text-anchor="end" transform="rotate(0.04 462.9 344.42)" >BO</text>
<text x="462.9" y="348.56" font-size="3.5" font-weight="bold" fill="#3a3400" font-family='"DejaVu Sans Condensed","DejaVu Sans","Liberation Sans",sans-serif' text-anchor="end" transform="rotate(0.04 462.9 348.56)" >EO</text>
<text x="462.9" y="352.71" font-size="3.5" font-weight="bold" fill="#3a3400" font-family='"DejaVu Sans Condensed","DejaVu Sans","Liberation Sans",sans-serif' text-anchor="end" transform="rotate(0.04 462.9 352.71)" >SUB</text>
<text x="462.9" y="356.86" font-size="3.5" font-weight="bold" fill="#3a3400" font-family='"DejaVu Sans Condensed","DejaVu Sans","Liberation Sans",sans-serif' text-anchor="end" transform="rotate(0.04 462.9 356.86)" >CE</text>
<text x="462.9" y="361" font-size="3.5" font-weight="bold" fill="#3a3400" font-family='"DejaVu Sans Condensed","DejaVu Sans","Liberation Sans",sans-serif' text-anchor="end" transform="rotate(0.04 462.9 361)" >CO</text>
<text x="462.9" y="365.15" font-size="3.5" font-weight="bold" fill="#3a3400" font-family='"DejaVu Sans Condensed","DejaVu Sans","Liberation Sans",sans-serif' text-anchor="end" transform="rotate(0.04 462.9 365.15)" >JUMP</text>
<text x="462.9" y="369.3" font-size="3.5" font-weight="bold" fill="#3a3400" font-family='"DejaVu Sans Condensed","DejaVu Sans","Liberation Sans",sans-serif' text-anchor="end" transform="rotate(0.04 462.9 369.3)" >OI</text>
<text x="462.9" y="373.44" font-size="3.5" font-weight="bold" fill="#3a3400" font-family='"DejaVu Sans Condensed","DejaVu Sans","Liberation Sans",sans-serif' text-anchor="end" transform="rotate(0.04 462.9 373.44)" >HLT</text>
<text x="462.9" y="377.59" font-size="3.5" font-weight="bold" fill="#3a3400" font-family='"DejaVu Sans Condensed","DejaVu Sans","Liberation Sans",sans-serif' text-anchor="end" transform="rotate(0.04 462.9 377.59)" >FI</text>
<line x1="361.61" y1="293.36" x2="367.42" y2="293.36" stroke="#0a6a0a" stroke-width="1.2"/>
<line x1="361.61" y1="305.8" x2="367.42" y2="305.8" stroke="#0a6a0a" stroke-width="1.2"/>
<line x1="361.61" y1="318.24" x2="367.42" y2="318.24" stroke="#0a6a0a" stroke-width="1.2"/>
<line x1="361.61" y1="330.68" x2="367.42" y2="330.68" stroke="#0a6a0a" stroke-width="1.2"/>
<line x1="361.61" y1="343.12" x2="367.42" y2="343.12" stroke="#0a6a0a" stroke-width="1.2"/>
<line x1="361.61" y1="355.56" x2="367.42" y2="355.56" stroke="#0a6a0a" stroke-width="1.2"/>
<line x1="361.61" y1="368" x2="367.42" y2="368" stroke="#0a6a0a" stroke-width="1.2"/>
<line x1="361.61" y1="380.44" x2="367.42" y2="380.44" stroke="#0a6a0a" stroke-width="1.2"/>
<line x1="367.42" y1="293.36" x2="367.42" y2="380.44" stroke="#000" stroke-width="2.0"/>
<line x1="369.91" y1="343.12" x2="367.42" y2="343.12" stroke="#000" stroke-width="1.8"/>
<polyline points="369.91,343.12 374.05,343.12" fill="none" stroke="#000" stroke-width="1.8" stroke-linecap="square" stroke-linejoin="miter"/>
<polygon points="361.61,293.36 359.95,288.86 359.95,287.76 349.95,287.76 349.95,298.96 359.95,298.96 359.95,297.86" fill="#fff" stroke="#1c1c1c" stroke-width="0.9" stroke-linejoin="round"/>
<text x="354.8" y="295.84" font-size="6.8" font-weight="bold" fill="#000" font-family='"DejaVu Sans Condensed","DejaVu Sans","Liberation Sans",sans-serif' text-anchor="middle" textLength="8.3" lengthAdjust="spacingAndGlyphs" transform="rotate(0.04 354.8 295.84)" >ZF</text>
<polygon points="361.61,305.8 359.95,301.3 359.95,300.2 349.75,300.2 349.75,311.4 359.95,311.4 359.95,310.3" fill="#fff" stroke="#1c1c1c" stroke-width="0.9" stroke-linejoin="round"/>
<text x="354.7" y="308.28" font-size="6.8" font-weight="bold" fill="#000" font-family='"DejaVu Sans Condensed","DejaVu Sans","Liberation Sans",sans-serif' text-anchor="middle" textLength="8.5" lengthAdjust="spacingAndGlyphs" transform="rotate(0.04 354.7 308.28)" >CF</text>
<polyline points="357.46,318.24 361.61,318.24" fill="none" stroke="#0a6a0a" stroke-width="1.2" stroke-linecap="butt" stroke-linejoin="miter"/>
<polyline points="361.61,318.24 361.61,330.68" fill="none" stroke="#0a6a0a" stroke-width="1.2" stroke-linecap="butt" stroke-linejoin="miter"/>
<circle cx="361.61" cy="318.24" r="2.0" fill="#0a6a0a"/>
<circle cx="354.36" cy="318.24" r="2.7" fill="#e3e3e3"/>
<text x="354.36" y="320.14" font-size="5.2" font-weight="bold" fill="#1a7a1a" font-family='"Liberation Sans",sans-serif' text-anchor="middle" transform="rotate(0.04 354.36 320.14)" >0</text>
<polygon points="361.61,343.12 359.95,341.02 359.95,339.02 351.35,339.02 351.35,347.22 359.95,347.22 359.95,345.22" fill="#fff" stroke="#1c1c1c" stroke-width="0.9" stroke-linejoin="round"/>
<text x="355.5" y="344.61" font-size="4.1" font-weight="bold" fill="#000" font-family='"DejaVu Sans Condensed","DejaVu Sans","Liberation Sans",sans-serif' text-anchor="middle" transform="rotate(0.04 355.5 344.61)" >IR4</text>
<polygon points="361.61,355.56 359.95,353.46 359.95,351.46 351.35,351.46 351.35,359.66 359.95,359.66 359.95,357.66" fill="#fff" stroke="#1c1c1c" stroke-width="0.9" stroke-linejoin="round"/>
<text x="355.5" y="357.05" font-size="4.1" font-weight="bold" fill="#000" font-family='"DejaVu Sans Condensed","DejaVu Sans","Liberation Sans",sans-serif' text-anchor="middle" transform="rotate(0.04 355.5 357.05)" >IR5</text>
<polygon points="361.61,368 359.95,365.9 359.95,363.9 351.35,363.9 351.35,372.1 359.95,372.1 359.95,370.1" fill="#fff" stroke="#1c1c1c" stroke-width="0.9" stroke-linejoin="round"/>
<text x="355.5" y="369.49" font-size="4.1" font-weight="bold" fill="#000" font-family='"DejaVu Sans Condensed","DejaVu Sans","Liberation Sans",sans-serif' text-anchor="middle" transform="rotate(0.04 355.5 369.49)" >IR6</text>
<polygon points="361.61,380.44 359.95,378.34 359.95,376.34 351.35,376.34 351.35,384.54 359.95,384.54 359.95,382.54" fill="#fff" stroke="#1c1c1c" stroke-width="0.9" stroke-linejoin="round"/>
<text x="355.5" y="381.93" font-size="4.1" font-weight="bold" fill="#000" font-family='"DejaVu Sans Condensed","DejaVu Sans","Liberation Sans",sans-serif' text-anchor="middle" transform="rotate(0.04 355.5 381.93)" >IR7</text>
<polyline points="465.3,309.95 469.45,309.95 469.45,268.48 523.37,268.48" fill="none" stroke="#00d200" stroke-width="1.2" stroke-linecap="butt" stroke-linejoin="miter"/>
<polyline points="465.3,314.09 473.6,314.09 473.6,280.92 523.37,280.92" fill="none" stroke="#0a6a0a" stroke-width="1.2" stroke-linecap="butt" stroke-linejoin="miter"/>
<polyline points="465.3,318.24 477.74,318.24 477.74,293.36 523.37,293.36" fill="none" stroke="#0a6a0a" stroke-width="1.2" stroke-linecap="butt" stroke-linejoin="miter"/>
<polyline points="465.3,322.39 481.89,322.39 481.89,305.8 523.37,305.8" fill="none" stroke="#0a6a0a" stroke-width="1.2" stroke-linecap="butt" stroke-linejoin="miter"/>
<polyline points="465.3,326.53 486.04,326.53 486.04,318.24 523.37,318.24" fill="none" stroke="#0a6a0a" stroke-width="1.2" stroke-linecap="butt" stroke-linejoin="miter"/>
<polyline points="465.3,330.68 523.37,330.68" fill="none" stroke="#0a6a0a" stroke-width="1.2" stroke-linecap="butt" stroke-linejoin="miter"/>
<polyline points="465.3,334.83 519.22,334.83 519.22,343.12 523.37,343.12" fill="none" stroke="#0a6a0a" stroke-width="1.2" stroke-linecap="butt" stroke-linejoin="miter"/>
<polyline points="465.3,338.97 515.07,338.97 515.07,355.56 523.37,355.56" fill="none" stroke="#0a6a0a" stroke-width="1.2" stroke-linecap="butt" stroke-linejoin="miter"/>
<polyline points="465.3,343.12 510.92,343.12 510.92,368 523.37,368" fill="none" stroke="#2a2aff" stroke-width="1.2" stroke-linecap="butt" stroke-linejoin="miter"/>
<polyline points="465.3,347.26 506.78,347.26 506.78,380.44 523.37,380.44" fill="none" stroke="#0a6a0a" stroke-width="1.2" stroke-linecap="butt" stroke-linejoin="miter"/>
<polyline points="465.3,351.41 502.63,351.41 502.63,392.87 523.37,392.87" fill="none" stroke="#0a6a0a" stroke-width="1.2" stroke-linecap="butt" stroke-linejoin="miter"/>
<polyline points="465.3,355.56 498.48,355.56 498.48,405.31 523.37,405.31" fill="none" stroke="#0a6a0a" stroke-width="1.2" stroke-linecap="butt" stroke-linejoin="miter"/>
<polyline points="465.3,359.7 494.33,359.7 494.33,417.75 523.37,417.75" fill="none" stroke="#00d200" stroke-width="1.2" stroke-linecap="butt" stroke-linejoin="miter"/>
<polyline points="465.3,363.85 490.19,363.85 490.19,430.19 523.37,430.19" fill="none" stroke="#0a6a0a" stroke-width="1.2" stroke-linecap="butt" stroke-linejoin="miter"/>
<polyline points="465.3,368 486.04,368 486.04,442.63 523.37,442.63" fill="none" stroke="#0a6a0a" stroke-width="1.2" stroke-linecap="butt" stroke-linejoin="miter"/>
<polyline points="465.3,372.14 481.89,372.14 481.89,455.07 523.37,455.07" fill="none" stroke="#0a6a0a" stroke-width="1.2" stroke-linecap="butt" stroke-linejoin="miter"/>
<polyline points="465.3,376.29 477.74,376.29 477.74,467.51 523.37,467.51" fill="none" stroke="#0a6a0a" stroke-width="1.2" stroke-linecap="butt" stroke-linejoin="miter"/>
<polygon points="523.37,268.48 525.03,263.98 525.03,262.88 535.63,262.88 535.63,274.08 525.03,274.08 525.03,272.98" fill="#fff" stroke="#1c1c1c" stroke-width="0.9" stroke-linejoin="round"/>
<text x="530.48" y="270.96" font-size="6.8" font-weight="bold" fill="#000" font-family='"DejaVu Sans Condensed","DejaVu Sans","Liberation Sans",sans-serif' text-anchor="middle" transform="rotate(0.04 530.48 270.96)" >MI</text>
<polygon points="523.37,280.92 525.03,276.42 525.03,275.32 532.83,275.32 532.83,286.52 525.03,286.52 525.03,285.42" fill="#fff" stroke="#1c1c1c" stroke-width="0.9" stroke-linejoin="round"/>
<text x="529.08" y="283.4" font-size="6.8" font-weight="bold" fill="#000" font-family='"DejaVu Sans Condensed","DejaVu Sans","Liberation Sans",sans-serif' text-anchor="middle" textLength="6.1" lengthAdjust="spacingAndGlyphs" transform="rotate(0.04 529.08 283.4)" >RI</text>
<polygon points="523.37,293.36 525.03,288.86 525.03,287.76 536.63,287.76 536.63,298.96 525.03,298.96 525.03,297.86" fill="#fff" stroke="#1c1c1c" stroke-width="0.9" stroke-linejoin="round"/>
<text x="530.98" y="295.84" font-size="6.8" font-weight="bold" fill="#000" font-family='"DejaVu Sans Condensed","DejaVu Sans","Liberation Sans",sans-serif' text-anchor="middle" transform="rotate(0.04 530.98 295.84)" >RO</text>
<polygon points="523.37,305.8 525.03,301.3 525.03,300.2 530.63,300.2 530.63,311.4 525.03,311.4 525.03,310.3" fill="#fff" stroke="#1c1c1c" stroke-width="0.9" stroke-linejoin="round"/>
<text x="527.98" y="308.28" font-size="6.8" font-weight="bold" fill="#000" font-family='"DejaVu Sans Condensed","DejaVu Sans","Liberation Sans",sans-serif' text-anchor="middle" textLength="3.9" lengthAdjust="spacingAndGlyphs" transform="rotate(0.04 527.98 308.28)" >II</text>
<polygon points="523.37,318.24 525.03,313.74 525.03,312.64 534.83,312.64 534.83,323.84 525.03,323.84 525.03,322.74" fill="#fff" stroke="#1c1c1c" stroke-width="0.9" stroke-linejoin="round"/>
<text x="530.08" y="320.72" font-size="6.8" font-weight="bold" fill="#000" font-family='"DejaVu Sans Condensed","DejaVu Sans","Liberation Sans",sans-serif' text-anchor="middle" transform="rotate(0.04 530.08 320.72)" >IO</text>
<polygon points="523.37,330.68 525.03,326.18 525.03,325.08 533.83,325.08 533.83,336.28 525.03,336.28 525.03,335.18" fill="#fff" stroke="#1c1c1c" stroke-width="0.9" stroke-linejoin="round"/>
<text x="529.58" y="333.16" font-size="6.8" font-weight="bold" fill="#000" font-family='"DejaVu Sans Condensed","DejaVu Sans","Liberation Sans",sans-serif' text-anchor="middle" transform="rotate(0.04 529.58 333.16)" >AI</text>
<polygon points="523.37,343.12 525.03,338.62 525.03,337.52 537.03,337.52 537.03,348.72 525.03,348.72 525.03,347.62" fill="#fff" stroke="#1c1c1c" stroke-width="0.9" stroke-linejoin="round"/>
<text x="531.18" y="345.6" font-size="6.8" font-weight="bold" fill="#000" font-family='"DejaVu Sans Condensed","DejaVu Sans","Liberation Sans",sans-serif' text-anchor="middle" transform="rotate(0.04 531.18 345.6)" >AO</text>
<polygon points="523.37,355.56 525.03,351.06 525.03,349.96 532.83,349.96 532.83,361.16 525.03,361.16 525.03,360.06" fill="#fff" stroke="#1c1c1c" stroke-width="0.9" stroke-linejoin="round"/>
<text x="529.08" y="358.04" font-size="6.8" font-weight="bold" fill="#000" font-family='"DejaVu Sans Condensed","DejaVu Sans","Liberation Sans",sans-serif' text-anchor="middle" textLength="6.1" lengthAdjust="spacingAndGlyphs" transform="rotate(0.04 529.08 358.04)" >BI</text>
<polygon points="523.37,368 525.03,363.5 525.03,362.4 536.03,362.4 536.03,373.6 525.03,373.6 525.03,372.5" fill="#fff" stroke="#1c1c1c" stroke-width="0.9" stroke-linejoin="round"/>
<text x="530.68" y="370.48" font-size="6.8" font-weight="bold" fill="#000" font-family='"DejaVu Sans Condensed","DejaVu Sans","Liberation Sans",sans-serif' text-anchor="middle" textLength="9.3" lengthAdjust="spacingAndGlyphs" transform="rotate(0.04 530.68 370.48)" >BO</text>
<polygon points="523.37,380.44 525.03,375.94 525.03,374.84 536.03,374.84 536.03,386.04 525.03,386.04 525.03,384.94" fill="#fff" stroke="#1c1c1c" stroke-width="0.9" stroke-linejoin="round"/>
<text x="530.68" y="382.92" font-size="6.8" font-weight="bold" fill="#000" font-family='"DejaVu Sans Condensed","DejaVu Sans","Liberation Sans",sans-serif' text-anchor="middle" transform="rotate(0.04 530.68 382.92)" >EO</text>
<polygon points="523.37,392.87 525.03,388.37 525.03,387.27 534.63,387.27 534.63,398.47 525.03,398.47 525.03,397.37" fill="#fff" stroke="#1c1c1c" stroke-width="0.9" stroke-linejoin="round"/>
<text x="529.98" y="395.36" font-size="6.8" font-weight="bold" fill="#000" font-family='"DejaVu Sans Condensed","DejaVu Sans","Liberation Sans",sans-serif' text-anchor="middle" textLength="7.9" lengthAdjust="spacingAndGlyphs" transform="rotate(0.04 529.98 395.36)" >SU</text>
<polygon points="523.37,405.31 525.03,400.81 525.03,399.71 535.03,399.71 535.03,410.91 525.03,410.91 525.03,409.81" fill="#fff" stroke="#1c1c1c" stroke-width="0.9" stroke-linejoin="round"/>
<text x="530.18" y="407.8" font-size="6.8" font-weight="bold" fill="#000" font-family='"DejaVu Sans Condensed","DejaVu Sans","Liberation Sans",sans-serif' text-anchor="middle" textLength="8.3" lengthAdjust="spacingAndGlyphs" transform="rotate(0.04 530.18 407.8)" >CE</text>
<polygon points="523.37,417.75 525.03,413.25 525.03,412.15 536.63,412.15 536.63,423.35 525.03,423.35 525.03,422.25" fill="#fff" stroke="#1c1c1c" stroke-width="0.9" stroke-linejoin="round"/>
<text x="530.98" y="420.24" font-size="6.8" font-weight="bold" fill="#000" font-family='"DejaVu Sans Condensed","DejaVu Sans","Liberation Sans",sans-serif' text-anchor="middle" transform="rotate(0.04 530.98 420.24)" >CO</text>
<polygon points="523.37,430.19 525.03,425.69 525.03,424.59 545.03,424.59 545.03,435.79 525.03,435.79 525.03,434.69" fill="#fff" stroke="#1c1c1c" stroke-width="0.9" stroke-linejoin="round"/>
<text x="535.18" y="432.67" font-size="6.8" font-weight="bold" fill="#000" font-family='"DejaVu Sans Condensed","DejaVu Sans","Liberation Sans",sans-serif' text-anchor="middle" transform="rotate(0.04 535.18 432.67)" >JUMP</text>
<polygon points="523.37,442.63 525.03,438.13 525.03,437.03 534.23,437.03 534.23,448.23 525.03,448.23 525.03,447.13" fill="#fff" stroke="#1c1c1c" stroke-width="0.9" stroke-linejoin="round"/>
<text x="529.78" y="445.11" font-size="6.8" font-weight="bold" fill="#000" font-family='"DejaVu Sans Condensed","DejaVu Sans","Liberation Sans",sans-serif' text-anchor="middle" transform="rotate(0.04 529.78 445.11)" >OI</text>
<polygon points="523.37,455.07 525.03,450.57 525.03,449.47 540.03,449.47 540.03,460.67 525.03,460.67 525.03,459.57" fill="#fff" stroke="#1c1c1c" stroke-width="0.9" stroke-linejoin="round"/>
<text x="532.68" y="457.55" font-size="6.8" font-weight="bold" fill="#000" font-family='"DejaVu Sans Condensed","DejaVu Sans","Liberation Sans",sans-serif' text-anchor="middle" transform="rotate(0.04 532.68 457.55)" >HLT</text>
<polygon points="523.37,467.51 525.03,463.01 525.03,461.91 532.43,461.91 532.43,473.11 525.03,473.11 525.03,472.01" fill="#fff" stroke="#1c1c1c" stroke-width="0.9" stroke-linejoin="round"/>
<text x="528.88" y="469.99" font-size="6.8" font-weight="bold" fill="#000" font-family='"DejaVu Sans Condensed","DejaVu Sans","Liberation Sans",sans-serif' text-anchor="middle" textLength="5.7" lengthAdjust="spacingAndGlyphs" transform="rotate(0.04 528.88 469.99)" >FI</text>
<rect x="382.35" y="492.39" width="87.1" height="62.2" fill="#8acbb0" stroke="#6f8f83" stroke-width="0.8"/>
<text x="426.2" y="526.5" font-size="11.3" font-weight="bold" fill="#fff" font-family='"Liberation Sans",sans-serif' text-anchor="middle" textLength="24" lengthAdjust="spacingAndGlyphs" transform="rotate(0.04 426.2 526.5)" >ALU</text>
<text x="387.7" y="500.59" font-size="5.1" font-weight="normal" fill="#0c2a20" font-family='"DejaVu Sans Condensed","DejaVu Sans","Liberation Sans",sans-serif' text-anchor="middle" textLength="8.6" lengthAdjust="spacingAndGlyphs" transform="rotate(0.04 387.7 500.59)" stroke="#0c2a20" stroke-width="0.22">CLK</text>
<polygon points="386.5,492.39 382,491.29 378.6,491.29 378.6,480.39 394.4,480.39 394.4,491.29 391,491.29" fill="#fff" stroke="#1c1c1c" stroke-width="0.9" stroke-linejoin="round"/>
<text x="386.5" y="488.32" font-size="6.8" font-weight="bold" fill="#000" font-family='"DejaVu Sans Condensed","DejaVu Sans","Liberation Sans",sans-serif' text-anchor="middle" transform="rotate(0.04 386.5 488.32)" >CLK</text>
<text x="411.38" y="500.59" font-size="5.1" font-weight="normal" fill="#0c2a20" font-family='"DejaVu Sans Condensed","DejaVu Sans","Liberation Sans",sans-serif' text-anchor="middle" textLength="5.6" lengthAdjust="spacingAndGlyphs" transform="rotate(0.04 411.38 500.59)" stroke="#0c2a20" stroke-width="0.22">SU</text>
<polygon points="411.38,492.39 406.88,491.29 405.18,491.29 405.18,480.39 417.58,480.39 417.58,491.29 415.88,491.29" fill="#fff" stroke="#1c1c1c" stroke-width="0.9" stroke-linejoin="round"/>
<text x="411.38" y="488.32" font-size="6.8" font-weight="bold" fill="#000" font-family='"DejaVu Sans Condensed","DejaVu Sans","Liberation Sans",sans-serif' text-anchor="middle" transform="rotate(0.04 411.38 488.32)" >SU</text>
<text x="440.41" y="500.59" font-size="5.1" font-weight="normal" fill="#0c2a20" font-family='"DejaVu Sans Condensed","DejaVu Sans","Liberation Sans",sans-serif' text-anchor="middle" textLength="5.8" lengthAdjust="spacingAndGlyphs" transform="rotate(0.04 440.41 500.59)" stroke="#0c2a20" stroke-width="0.22">EO</text>
<polygon points="440.41,492.39 435.91,491.29 434.11,491.29 434.11,480.39 446.71,480.39 446.71,491.29 444.91,491.29" fill="#fff" stroke="#1c1c1c" stroke-width="0.9" stroke-linejoin="round"/>
<text x="440.41" y="488.32" font-size="6.8" font-weight="bold" fill="#000" font-family='"DejaVu Sans Condensed","DejaVu Sans","Liberation Sans",sans-serif' text-anchor="middle" transform="rotate(0.04 440.41 488.32)" >EO</text>
<text x="465.3" y="500.59" font-size="5.1" font-weight="normal" fill="#0c2a20" font-family='"DejaVu Sans Condensed","DejaVu Sans","Liberation Sans",sans-serif' text-anchor="middle" textLength="3.6" lengthAdjust="spacingAndGlyphs" transform="rotate(0.04 465.3 500.59)" stroke="#0c2a20" stroke-width="0.22">FI</text>
<polygon points="465.3,492.39 460.8,491.29 461,491.29 461,480.39 469.6,480.39 469.6,491.29 469.8,491.29" fill="#fff" stroke="#1c1c1c" stroke-width="0.9" stroke-linejoin="round"/>
<text x="465.3" y="488.32" font-size="6.8" font-weight="bold" fill="#000" font-family='"DejaVu Sans Condensed","DejaVu Sans","Liberation Sans",sans-serif' text-anchor="middle" transform="rotate(0.04 465.3 488.32)" >FI</text>
<text x="385.95" y="523.01" font-size="5.1" font-weight="normal" fill="#0c2a20" font-family='"DejaVu Sans Condensed","DejaVu Sans","Liberation Sans",sans-serif' text-anchor="start" textLength="10.6" lengthAdjust="spacingAndGlyphs" transform="rotate(0.04 385.95 523.01)" stroke="#0c2a20" stroke-width="0.22">IN_A</text>
<text x="466.05" y="523.01" font-size="5.1" font-weight="normal" fill="#0c2a20" font-family='"DejaVu Sans Condensed","DejaVu Sans","Liberation Sans",sans-serif' text-anchor="end" textLength="10.6" lengthAdjust="spacingAndGlyphs" transform="rotate(0.04 466.05 523.01)" stroke="#0c2a20" stroke-width="0.22">IN_B</text>
<text x="403.09" y="549.58" font-size="5.1" font-weight="normal" fill="#0c2a20" font-family='"DejaVu Sans Condensed","DejaVu Sans","Liberation Sans",sans-serif' text-anchor="middle" textLength="10" lengthAdjust="spacingAndGlyphs" transform="rotate(0.04 403.09 549.58)" stroke="#0c2a20" stroke-width="0.22">SUM</text>
<text x="432.12" y="549.58" font-size="5.1" font-weight="normal" fill="#0c2a20" font-family='"DejaVu Sans Condensed","DejaVu Sans","Liberation Sans",sans-serif' text-anchor="middle" textLength="5.4" lengthAdjust="spacingAndGlyphs" transform="rotate(0.04 432.12 549.58)" stroke="#0c2a20" stroke-width="0.22">ZF</text>
<text x="457" y="549.58" font-size="5.1" font-weight="normal" fill="#0c2a20" font-family='"DejaVu Sans Condensed","DejaVu Sans","Liberation Sans",sans-serif' text-anchor="middle" textLength="5.4" lengthAdjust="spacingAndGlyphs" transform="rotate(0.04 457 549.58)" stroke="#0c2a20" stroke-width="0.22">CF</text>
<polygon points="432.12,554.58 427.62,556.08 426.82,556.08 426.82,566.58 437.42,566.58 437.42,556.08 436.62,556.08" fill="#fff" stroke="#1c1c1c" stroke-width="0.9" stroke-linejoin="round"/>
<text x="432.12" y="563.82" font-size="6.8" font-weight="bold" fill="#000" font-family='"DejaVu Sans Condensed","DejaVu Sans","Liberation Sans",sans-serif' text-anchor="middle" transform="rotate(0.04 432.12 563.82)" >ZF</text>
<polygon points="457,554.58 452.5,556.08 451.7,556.08 451.7,566.58 462.3,566.58 462.3,556.08 461.5,556.08" fill="#fff" stroke="#1c1c1c" stroke-width="0.9" stroke-linejoin="round"/>
<text x="457" y="563.82" font-size="6.8" font-weight="bold" fill="#000" font-family='"DejaVu Sans Condensed","DejaVu Sans","Liberation Sans",sans-serif' text-anchor="middle" transform="rotate(0.04 457 563.82)" >CF</text>
<path d="M320.49 521.77H337.5V546.5H320.49Z" fill="#fff" stroke="#2a2a2a" stroke-width="0.65"/>
<path d="M318.99 520.27H335.5V545.5H318.99Z" fill="#fff" stroke="#2a2a2a" stroke-width="0.65"/>
<path d="M317.49 518.77H334.5V543.5H317.49Z" fill="#fff" stroke="#2a2a2a" stroke-width="0.65"/>
<line x1="324.28" y1="542.15" x2="324.28" y2="546.35" stroke="#3a3a3a" stroke-width="0.75"/>
<line x1="311.84" y1="521.41" x2="315.99" y2="521.41" stroke="#000" stroke-width="1.8"/>
<line x1="332.58" y1="521.41" x2="336.72" y2="521.41" stroke="#000" stroke-width="1.8"/>
<rect x="315.99" y="517.27" width="16.59" height="24.88" fill="#fff" stroke="#1c1c1c" stroke-width="1"/>
<text x="319.39" y="523.31" font-size="5.4" font-weight="normal" fill="#333" font-family='"Liberation Sans",sans-serif' text-anchor="middle" transform="rotate(0.04 319.39 523.31)" >D</text>
<text x="328.78" y="523.31" font-size="5.4" font-weight="normal" fill="#333" font-family='"Liberation Sans",sans-serif' text-anchor="middle" transform="rotate(0.04 328.78 523.31)" >Q</text>
<text x="316.79" y="531.61" font-size="5.3" font-weight="normal" fill="#222" font-family='"DejaVu Sans Condensed","DejaVu Sans","Liberation Sans",sans-serif' text-anchor="start" transform="rotate(0.04 316.79 531.61)" >WE</text>
<path d="M315.99 535.9L319.59 538L315.99 540.1" fill="none" stroke="#1c1c1c" stroke-width="0.8"/>
<text x="324.08" y="540" font-size="5.4" font-weight="normal" fill="#b4b4b4" font-family='"Liberation Sans",sans-serif' text-anchor="middle" transform="rotate(0.04 324.08 540)" >R</text>
<path d="M319.28 509.07L329.28 509.07L327.58 510.47H320.98Z" fill="#d9d9d9"/>
<rect x="320.58" y="510.07" width="7.4" height="5.2" fill="#c9c9c9"/>
<text x="324.28" y="514.42" font-size="4.9" font-weight="normal" fill="#6a6a6a" font-family='"Liberation Sans",sans-serif' text-anchor="middle" transform="rotate(0.04 324.28 514.42)" >00</text>
<text x="306.8" y="506.6" font-size="6.7" font-weight="bold" fill="#1a1aff" font-family='"DejaVu Sans Condensed","DejaVu Sans","Liberation Sans",sans-serif' text-anchor="start" textLength="35.5" lengthAdjust="spacingAndGlyphs" transform="rotate(0.04 306.8 506.6)" >Register_A</text>
<polygon points="311.84,529.71 310.18,527.61 310.18,525.61 303.88,525.61 303.88,533.81 310.18,533.81 310.18,531.81" fill="#fff" stroke="#1c1c1c" stroke-width="0.9" stroke-linejoin="round"/>
<text x="306.88" y="531.2" font-size="4.1" font-weight="bold" fill="#000" font-family='"DejaVu Sans Condensed","DejaVu Sans","Liberation Sans",sans-serif' text-anchor="middle" transform="rotate(0.04 306.88 531.2)" >AI</text>
<polyline points="311.84,529.71 315.99,529.71" fill="none" stroke="#0a6a0a" stroke-width="1.2" stroke-linecap="butt" stroke-linejoin="miter"/>
<polygon points="311.84,538 310.18,535.9 310.18,533.9 299.58,533.9 299.58,542.1 310.18,542.1 310.18,540.1" fill="#fff" stroke="#1c1c1c" stroke-width="0.9" stroke-linejoin="round"/>
<text x="304.73" y="539.5" font-size="4.1" font-weight="bold" fill="#000" font-family='"DejaVu Sans Condensed","DejaVu Sans","Liberation Sans",sans-serif' text-anchor="middle" transform="rotate(0.04 304.73 539.5)" >CLK</text>
<polyline points="311.84,538 315.99,538" fill="none" stroke="#0a6a0a" stroke-width="1.2" stroke-linecap="butt" stroke-linejoin="miter"/>
<path d="M353.61 530.75L359.71 533.85L353.61 536.95Z" fill="#fff" stroke="#1c1c1c" stroke-width="0.9" stroke-linejoin="miter"/>
<line x1="359.71" y1="533.85" x2="361.61" y2="533.85" stroke="#000" stroke-width="1.8"/>
<polygon points="353.31,542.15 351.65,537.65 351.65,536.55 338.55,536.55 338.55,547.75 351.65,547.75 351.65,546.65" fill="#fff" stroke="#1c1c1c" stroke-width="0.9" stroke-linejoin="round"/>
<text x="344.95" y="544.63" font-size="6.8" font-weight="bold" fill="#000" font-family='"DejaVu Sans Condensed","DejaVu Sans","Liberation Sans",sans-serif' text-anchor="middle" transform="rotate(0.04 344.95 544.63)" >AO</text>
<polyline points="353.31,542.15 357.46,542.15 357.46,535.93" fill="none" stroke="#00d200" stroke-width="1.2" stroke-linecap="butt" stroke-linejoin="miter"/>
<path d="M502.98 530.06H519.5V554.5H502.98Z" fill="#fff" stroke="#2a2a2a" stroke-width="0.65"/>
<path d="M501.48 528.56H518.5V553.5H501.48Z" fill="#fff" stroke="#2a2a2a" stroke-width="0.65"/>
<path d="M499.98 527.06H516.5V551.5H499.98Z" fill="#fff" stroke="#2a2a2a" stroke-width="0.65"/>
<line x1="506.78" y1="550.44" x2="506.78" y2="554.64" stroke="#3a3a3a" stroke-width="0.75"/>
<line x1="494.33" y1="529.71" x2="498.48" y2="529.71" stroke="#000" stroke-width="1.8"/>
<line x1="515.07" y1="529.71" x2="519.22" y2="529.71" stroke="#000" stroke-width="1.8"/>
<rect x="498.48" y="525.56" width="16.59" height="24.88" fill="#fff" stroke="#1c1c1c" stroke-width="1"/>
<text x="501.88" y="531.61" font-size="5.4" font-weight="normal" fill="#333" font-family='"Liberation Sans",sans-serif' text-anchor="middle" transform="rotate(0.04 501.88 531.61)" >D</text>
<text x="511.27" y="531.61" font-size="5.4" font-weight="normal" fill="#333" font-family='"Liberation Sans",sans-serif' text-anchor="middle" transform="rotate(0.04 511.27 531.61)" >Q</text>
<text x="499.28" y="539.9" font-size="5.3" font-weight="normal" fill="#222" font-family='"DejaVu Sans Condensed","DejaVu Sans","Liberation Sans",sans-serif' text-anchor="start" transform="rotate(0.04 499.28 539.9)" >WE</text>
<path d="M498.48 544.19L502.08 546.29L498.48 548.39" fill="none" stroke="#1c1c1c" stroke-width="0.8"/>
<text x="506.58" y="548.29" font-size="5.4" font-weight="normal" fill="#b4b4b4" font-family='"Liberation Sans",sans-serif' text-anchor="middle" transform="rotate(0.04 506.58 548.29)" >R</text>
<path d="M501.78 517.36L511.78 517.36L510.08 518.76H503.48Z" fill="#d9d9d9"/>
<rect x="503.08" y="518.36" width="7.4" height="5.2" fill="#c9c9c9"/>
<text x="506.78" y="522.71" font-size="4.9" font-weight="normal" fill="#6a6a6a" font-family='"Liberation Sans",sans-serif' text-anchor="middle" transform="rotate(0.04 506.78 522.71)" >00</text>
<text x="489.5" y="515" font-size="6.7" font-weight="bold" fill="#1a1aff" font-family='"DejaVu Sans Condensed","DejaVu Sans","Liberation Sans",sans-serif' text-anchor="start" textLength="34.7" lengthAdjust="spacingAndGlyphs" transform="rotate(0.04 489.5 515)" >Register_B</text>
<polygon points="494.33,538 492.67,535.9 492.67,533.9 486.37,533.9 486.37,542.1 492.67,542.1 492.67,540.1" fill="#fff" stroke="#1c1c1c" stroke-width="0.9" stroke-linejoin="round"/>
<text x="489.37" y="539.5" font-size="4.1" font-weight="bold" fill="#000" font-family='"DejaVu Sans Condensed","DejaVu Sans","Liberation Sans",sans-serif' text-anchor="middle" transform="rotate(0.04 489.37 539.5)" >BI</text>
<polyline points="494.33,538 498.48,538" fill="none" stroke="#0a6a0a" stroke-width="1.2" stroke-linecap="butt" stroke-linejoin="miter"/>
<polygon points="494.33,546.29 492.67,544.19 492.67,542.19 482.27,542.19 482.27,550.39 492.67,550.39 492.67,548.39" fill="#fff" stroke="#1c1c1c" stroke-width="0.9" stroke-linejoin="round"/>
<text x="487.32" y="547.79" font-size="4.1" font-weight="bold" fill="#000" font-family='"DejaVu Sans Condensed","DejaVu Sans","Liberation Sans",sans-serif' text-anchor="middle" transform="rotate(0.04 487.32 547.79)" >CLK</text>
<polyline points="494.33,546.29 498.48,546.29" fill="none" stroke="#0a6a0a" stroke-width="1.2" stroke-linecap="butt" stroke-linejoin="miter"/>
<path d="M536.11 539.05L542.21 542.15L536.11 545.25Z" fill="#fff" stroke="#1c1c1c" stroke-width="0.9" stroke-linejoin="miter"/>
<line x1="542.21" y1="542.15" x2="544.1" y2="542.15" stroke="#000" stroke-width="1.8"/>
<polygon points="535.81,550.44 534.15,545.94 534.15,544.84 521.45,544.84 521.45,556.04 534.15,556.04 534.15,554.94" fill="#fff" stroke="#1c1c1c" stroke-width="0.9" stroke-linejoin="round"/>
<text x="527.65" y="552.92" font-size="6.8" font-weight="bold" fill="#000" font-family='"DejaVu Sans Condensed","DejaVu Sans","Liberation Sans",sans-serif' text-anchor="middle" transform="rotate(0.04 527.65 552.92)" >BO</text>
<polyline points="535.81,550.44 539.96,550.44 539.96,544.22" fill="none" stroke="#2a2aff" stroke-width="1.2" stroke-linecap="butt" stroke-linejoin="miter"/>
<path d="M585.93 571.52H602.5V596.5H585.93Z" fill="#fff" stroke="#2a2a2a" stroke-width="0.65"/>
<path d="M584.43 570.02H601.5V594.5H584.43Z" fill="#fff" stroke="#2a2a2a" stroke-width="0.65"/>
<path d="M582.93 568.52H599.5V593.5H582.93Z" fill="#fff" stroke="#2a2a2a" stroke-width="0.65"/>
<line x1="589.73" y1="591.9" x2="589.73" y2="596.1" stroke="#3a3a3a" stroke-width="0.75"/>
<line x1="577.29" y1="571.17" x2="581.43" y2="571.17" stroke="#000" stroke-width="1.8"/>
<line x1="598.02" y1="571.17" x2="602.17" y2="571.17" stroke="#000" stroke-width="1.8"/>
<rect x="581.43" y="567.02" width="16.59" height="24.88" fill="#fff" stroke="#1c1c1c" stroke-width="1"/>
<text x="584.83" y="573.07" font-size="5.4" font-weight="normal" fill="#333" font-family='"Liberation Sans",sans-serif' text-anchor="middle" transform="rotate(0.04 584.83 573.07)" >D</text>
<text x="594.22" y="573.07" font-size="5.4" font-weight="normal" fill="#333" font-family='"Liberation Sans",sans-serif' text-anchor="middle" transform="rotate(0.04 594.22 573.07)" >Q</text>
<text x="582.23" y="581.36" font-size="5.3" font-weight="normal" fill="#222" font-family='"DejaVu Sans Condensed","DejaVu Sans","Liberation Sans",sans-serif' text-anchor="start" transform="rotate(0.04 582.23 581.36)" >WE</text>
<path d="M581.43 585.66L585.03 587.76L581.43 589.86" fill="none" stroke="#1c1c1c" stroke-width="0.8"/>
<text x="589.53" y="589.76" font-size="5.4" font-weight="normal" fill="#b4b4b4" font-family='"Liberation Sans",sans-serif' text-anchor="middle" transform="rotate(0.04 589.53 589.76)" >R</text>
<path d="M584.73 558.82L594.73 558.82L593.03 560.22H586.43Z" fill="#d9d9d9"/>
<rect x="586.03" y="559.82" width="7.4" height="5.2" fill="#c9c9c9"/>
<text x="589.73" y="564.17" font-size="4.9" font-weight="normal" fill="#6a6a6a" font-family='"Liberation Sans",sans-serif' text-anchor="middle" transform="rotate(0.04 589.73 564.17)" >00</text>
<text x="568.1" y="556.7" font-size="6.7" font-weight="bold" fill="#1a1aff" font-family='"DejaVu Sans Condensed","DejaVu Sans","Liberation Sans",sans-serif' text-anchor="start" textLength="43.9" lengthAdjust="spacingAndGlyphs" transform="rotate(0.04 568.1 556.7)" >Register_Out</text>
<polygon points="568.99,579.46 567.33,577.36 567.33,575.36 561.03,575.36 561.03,583.56 567.33,583.56 567.33,581.56" fill="#fff" stroke="#1c1c1c" stroke-width="0.9" stroke-linejoin="round"/>
<text x="564.03" y="580.96" font-size="4.1" font-weight="bold" fill="#000" font-family='"DejaVu Sans Condensed","DejaVu Sans","Liberation Sans",sans-serif' text-anchor="middle" transform="rotate(0.04 564.03 580.96)" >OI</text>
<polyline points="568.99,579.46 581.43,579.46" fill="none" stroke="#0a6a0a" stroke-width="1.2" stroke-linecap="butt" stroke-linejoin="miter"/>
<polygon points="568.99,596.05 567.33,593.95 567.33,591.95 556.93,591.95 556.93,600.15 567.33,600.15 567.33,598.15" fill="#fff" stroke="#1c1c1c" stroke-width="0.9" stroke-linejoin="round"/>
<text x="561.98" y="597.54" font-size="4.1" font-weight="bold" fill="#000" font-family='"DejaVu Sans Condensed","DejaVu Sans","Liberation Sans",sans-serif' text-anchor="middle" transform="rotate(0.04 561.98 597.54)" >CLK</text>
<polyline points="568.99,596.05 577.29,596.05 577.29,587.76 581.43,587.76" fill="none" stroke="#0a6a0a" stroke-width="1.2" stroke-linecap="butt" stroke-linejoin="miter"/>
<path d="M629.3 567.17H647.4L651.6 571.17L647.4 575.17H629.3Z" fill="#fff" stroke="#1c1c1c" stroke-width="0.95" stroke-linejoin="round"/>
<text x="643.4" y="572.67" font-size="4.8" font-weight="normal" fill="#111" font-family='"Liberation Sans",sans-serif' text-anchor="middle" transform="rotate(0.04 643.4 572.67)" >0</text>
<circle cx="646" cy="573.07" r="0.7" fill="#2a2aff"/>
<text x="653" y="573.77" font-size="6.7" font-weight="bold" fill="#1a1aff" font-family='"DejaVu Sans Condensed","DejaVu Sans","Liberation Sans",sans-serif' text-anchor="start" textLength="50.5" lengthAdjust="spacingAndGlyphs" transform="rotate(0.04 653 573.77)" >BUS_DATA_INT</text>
<path d="M629.3 596.19H643L647.2 600.19L643 604.19H629.3Z" fill="#fff" stroke="#1c1c1c" stroke-width="0.95" stroke-linejoin="round"/>
<text x="639" y="601.69" font-size="4.8" font-weight="normal" fill="#111" font-family='"Liberation Sans",sans-serif' text-anchor="middle" transform="rotate(0.04 639 601.69)" >0</text>
<circle cx="641.6" cy="602.09" r="0.7" fill="#2a2aff"/>
<text x="649" y="602.79" font-size="6.7" font-weight="bold" fill="#1a1aff" font-family='"DejaVu Sans Condensed","DejaVu Sans","Liberation Sans",sans-serif' text-anchor="start" textLength="55" lengthAdjust="spacingAndGlyphs" transform="rotate(0.04 649 602.79)" >BUS_DATA_UINT</text>
</g></svg>
</body></html>
